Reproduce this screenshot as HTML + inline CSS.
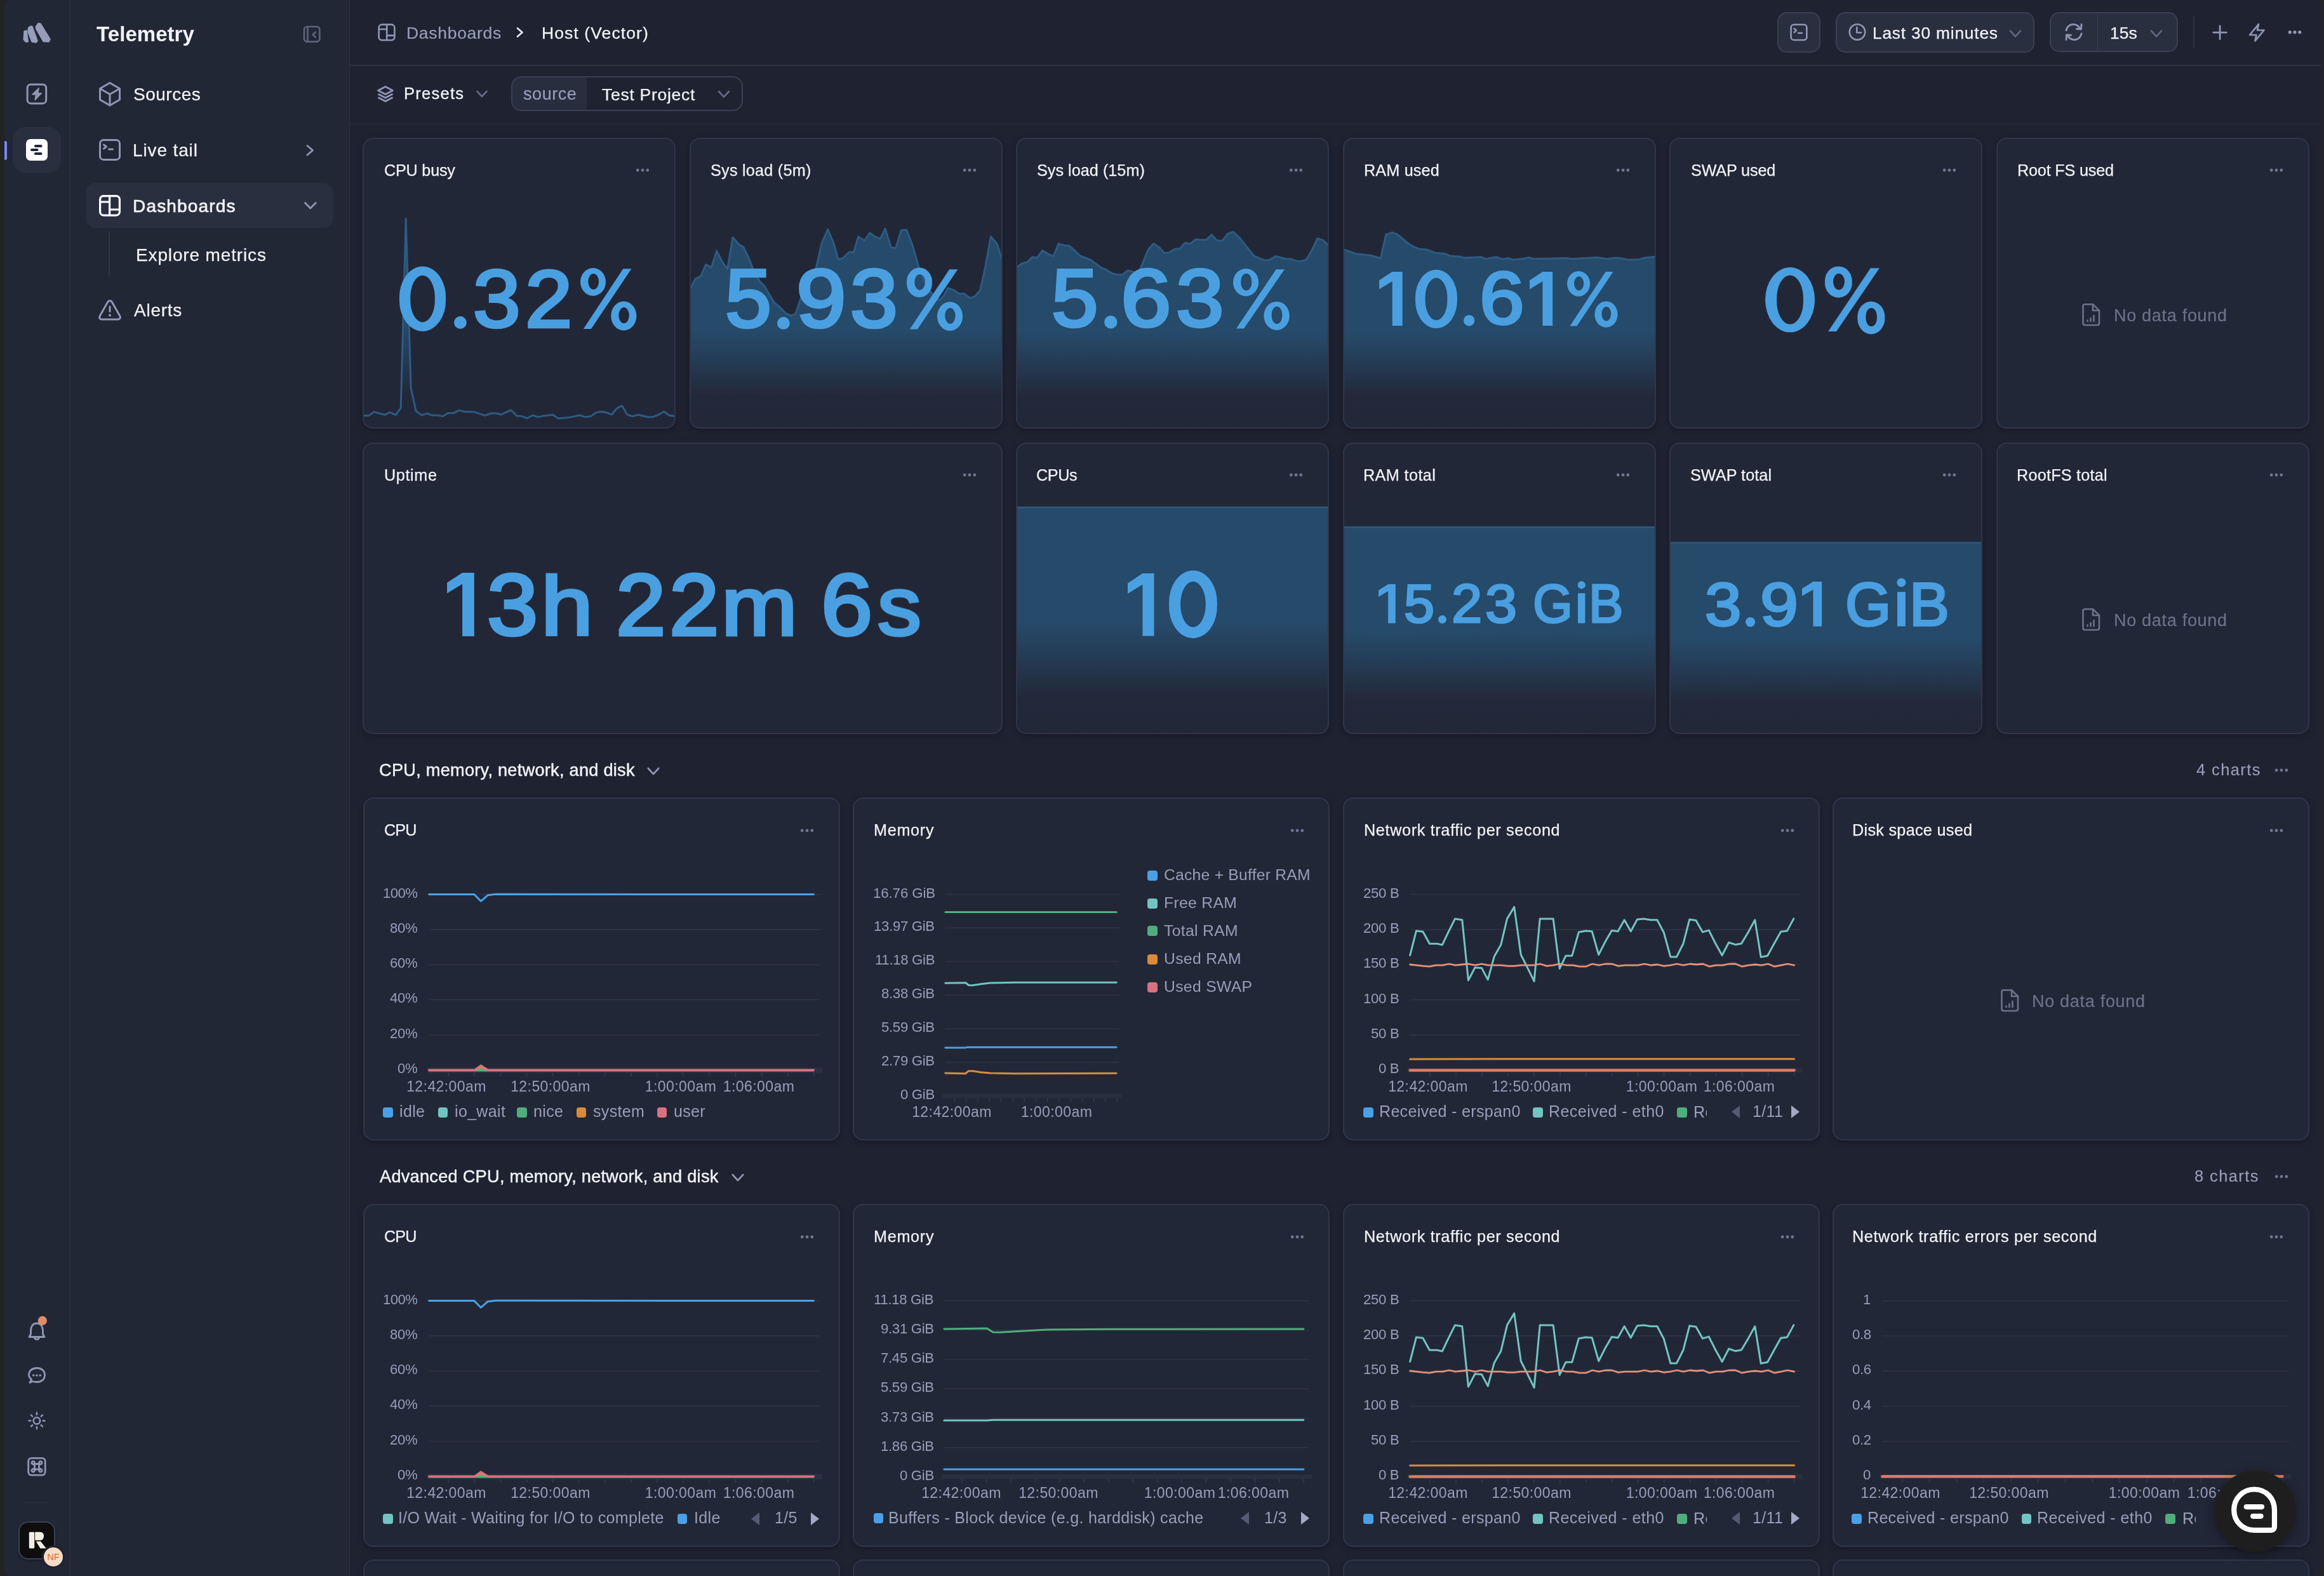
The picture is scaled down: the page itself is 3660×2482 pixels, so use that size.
<!DOCTYPE html><html><head><meta charset="utf-8"><style>html,body{margin:0;padding:0}body{width:3660px;height:2482px;overflow:hidden;position:relative;background:#222423;font-family:"Liberation Sans",sans-serif}.t{position:absolute;line-height:1;white-space:nowrap;will-change:transform}@media (max-width:2400px){html{zoom:0.5}}#app{position:absolute;left:0;top:0;width:3660px;height:2482px;overflow:hidden;background:#1f2231;clip-path:inset(0px 4px -5px 7px round 12px 12px 16px 16px)}</style></head><body><div id="app">
<div style="position:absolute;left:0.0px;top:0.0px;width:550.0px;height:2482.0px;background:#222736"></div>
<div style="position:absolute;left:109.5px;top:0.0px;width:1.5px;height:2482.0px;background:#2c3143"></div>
<div style="position:absolute;left:549.5px;top:0.0px;width:1.5px;height:2482.0px;background:#2c3143"></div>
<div style="position:absolute;left:551.0px;top:102.0px;width:3110.0px;height:1.5px;background:#2c3143"></div>
<div style="position:absolute;left:551.0px;top:194.5px;width:3110.0px;height:1.5px;background:#2c3143"></div>
<svg style="position:absolute;left:30.0px;top:30.0px;" width="56.0" height="44.0" viewBox="30.0 30.0 56.0 44.0"><g fill="#959db8" stroke="#959db8" stroke-width="2.5" stroke-linejoin="round"><polygon points="38.5,49.5 41.5,48.5 43.8,65.5 40.5,65.5 37.8,62.0"/><polygon points="45.0,44.0 48.5,41.5 50.5,42.0 58.5,64.5 56.5,66.5 50.5,65.5 44.5,50.0"/><polygon points="57.0,42.0 60.5,37.0 63.5,37.5 78.5,62.0 76.5,65.5 68.5,65.0 57.0,45.0"/></g></svg>
<svg style="position:absolute;left:38.0px;top:128.0px;" width="40.0" height="40.0" viewBox="38.0 128.0 40.0 40.0"><rect x="43.1" y="133" width="29.6" height="29.9" rx="5.5" fill="none" stroke="#8f97b3" stroke-width="3"/><polygon points="61.2,138.8 50.8,148.8 56.5,148.8 55.2,157.6 65.4,146.8 59.6,146.8" fill="#8f97b3" stroke="#8f97b3" stroke-width="1.5" stroke-linejoin="round"/></svg>
<div style="position:absolute;left:20.0px;top:200.0px;width:76.0px;height:72.0px;background:#2a2f40;border-radius:20px"></div>
<div style="position:absolute;left:41.2px;top:219.2px;width:33.6px;height:33.7px;background:#ffffff;border-radius:7px"></div>
<svg style="position:absolute;left:41.0px;top:219.0px;" width="34.0" height="34.0" viewBox="41.0 219.0 34.0 34.0"><g stroke="#222736" stroke-width="4.2" stroke-linecap="round"><line x1="56" y1="230" x2="64.5" y2="230"/><line x1="50" y1="236" x2="58.5" y2="236"/><line x1="56" y1="242" x2="64.5" y2="242"/></g></svg>
<div style="position:absolute;left:7.0px;top:222.0px;width:3.5px;height:30.0px;background:#7c87f2;border-radius:0 3px 3px 0"></div>
<svg style="position:absolute;left:40.0px;top:2070.0px;" width="40.0" height="50.0" viewBox="40.0 2070.0 40.0 50.0"><g fill="none" stroke="#8f97b3" stroke-width="2.8" stroke-linejoin="round" stroke-linecap="round"><path d="M58,2084 C51,2084 48.5,2090 48.5,2096 L48.5,2101 L46,2105.5 L70,2105.5 L67.5,2101 L67.5,2096 C67.5,2090 65,2084 58,2084 Z"/><path d="M54.5,2106 C54.5,2110.5 61.5,2110.5 61.5,2106"/></g><circle cx="66.9" cy="2079.9" r="7.1" fill="#e08c68" stroke="#222736" stroke-width="0"/></svg>
<svg style="position:absolute;left:40.0px;top:2148.0px;" width="40.0" height="36.0" viewBox="40.0 2148.0 40.0 36.0"><g fill="none" stroke="#8f97b3" stroke-width="2.8" stroke-linejoin="round" stroke-linecap="round"><path d="M47,2177.5 L49.5,2172.5 C46,2169 45.5,2166 45.5,2165.5 C45.5,2158.5 51,2154.5 58,2154.5 C65,2154.5 70.5,2158.5 70.5,2165.5 C70.5,2172.5 65,2176.5 58,2176.5 C55,2176.5 52.5,2176 50.5,2175.5 Z"/></g><g fill="#8f97b3"><circle cx="52.7" cy="2166" r="1.8"/><circle cx="57.9" cy="2166" r="1.8"/><circle cx="63.2" cy="2166" r="1.8"/></g></svg>
<svg style="position:absolute;left:40.0px;top:2220.0px;" width="36.0" height="36.0" viewBox="40.0 2220.0 36.0 36.0"><g fill="none" stroke="#8f97b3" stroke-width="2.6" stroke-linecap="round"><circle cx="57.9" cy="2237.5" r="5.2"/><line x1="67.7" y1="2237.5" x2="70.5" y2="2237.5"/><line x1="64.8" y1="2244.4" x2="66.8" y2="2246.4"/><line x1="57.9" y1="2247.3" x2="57.9" y2="2250.1"/><line x1="51.0" y1="2244.4" x2="49.0" y2="2246.4"/><line x1="48.1" y1="2237.5" x2="45.3" y2="2237.5"/><line x1="51.0" y1="2230.6" x2="49.0" y2="2228.6"/><line x1="57.9" y1="2227.7" x2="57.9" y2="2224.9"/><line x1="64.8" y1="2230.6" x2="66.8" y2="2228.6"/></g></svg>
<svg style="position:absolute;left:40.0px;top:2290.0px;" width="38.0" height="40.0" viewBox="40.0 2290.0 38.0 40.0"><g fill="none" stroke="#8f97b3" stroke-width="2.8"><rect x="44.7" y="2296.4" width="26.5" height="26.7" rx="5"/><path d="M54.5,2305.5 L61.5,2305.5 L61.5,2314 L54.5,2314 Z"/><path d="M54.5,2305.5 L54.5,2303.8 A2.3,2.3 0 1 0 52.2,2306 L54.5,2306"/><path d="M61.5,2305.5 L61.5,2303.8 A2.3,2.3 0 1 1 63.8,2306 L61.5,2306"/><path d="M54.5,2314 L54.5,2315.7 A2.3,2.3 0 1 1 52.2,2313.5 L54.5,2313.5"/><path d="M61.5,2314 L61.5,2315.7 A2.3,2.3 0 1 0 63.8,2313.5 L61.5,2313.5"/></g></svg>
<div style="position:absolute;left:38.0px;top:2365.5px;width:40.0px;height:1.5px;background:#2c3143"></div>
<div style="position:absolute;left:28.5px;top:2396.0px;width:58.9px;height:59.7px;background:#0e0e0e;border:2px solid #394057;border-radius:15px;box-sizing:border-box;box-shadow:0 2px 4px rgba(0,0,0,.3)"></div>
<svg style="position:absolute;left:40.0px;top:2408.0px;" width="36.0" height="36.0" viewBox="40.0 2408.0 36.0 36.0"><g fill="#f4efe5"><rect x="45.8" y="2412.8" width="8.4" height="25.8" rx="1.5"/><path d="M55.2,2412.8 L63,2412.8 C67.5,2412.8 69,2416 69,2419 C69,2422 67.5,2425.8 63,2425.8 L55.2,2425.8 Z"/><path d="M56.8,2427.5 L64,2427.5 L72.8,2438.6 L63.5,2438.6 Z"/></g></svg>
<div style="position:absolute;left:66.0px;top:2433.8px;width:36.0px;height:36.0px;background:#1e2232;border-radius:50%"></div>
<div style="position:absolute;left:68.8px;top:2436.6px;width:30.4px;height:30.4px;background:#f9dcc5;border-radius:50%"></div>
<div class="t" id="tx0" style="left:-916.0px;width:2000px;text-align:center;top:2444.5px;font-size:14.5px;color:#d8692a;font-weight:400;letter-spacing:0.000px;"><span>NF</span></div>
<div class="t" id="tx1" style="left:152.2px;top:37.3px;font-size:33px;color:#f2f3f7;font-weight:700;letter-spacing:0.050px;"><span>Telemetry</span></div>
<svg style="position:absolute;left:472.0px;top:36.0px;" width="38.0" height="36.0" viewBox="472.0 36.0 38.0 36.0"><g fill="none" stroke="#5d6479" stroke-width="2.6" stroke-linecap="round" stroke-linejoin="round"><rect x="479" y="42" width="24.4" height="23.6" rx="4.5"/><line x1="484.5" y1="42.5" x2="484.5" y2="65"/><polyline points="497,50.5 492.5,54.5 497,58.5"/></g></svg>
<svg style="position:absolute;left:150.0px;top:124.0px;" width="46.0" height="48.0" viewBox="150.0 124.0 46.0 48.0"><g fill="none" stroke="#8f97b3" stroke-width="3" stroke-linejoin="round"><path d="M173,130.5 L188.5,139.5 L188.5,157 L173,166 L157.5,157 L157.5,139.5 Z"/><path d="M157.5,139.5 L173,148.5 L188.5,139.5 M173,148.5 L173,166"/></g></svg>
<div class="t" id="tx2" style="left:209.5px;top:135.3px;font-size:28px;color:#f2f3f7;font-weight:400;letter-spacing:0.500px;-webkit-text-stroke:0.25px #f2f3f7;"><span>Sources</span></div>
<svg style="position:absolute;left:150.0px;top:212.0px;" width="46.0" height="46.0" viewBox="150.0 212.0 46.0 46.0"><g fill="none" stroke="#8f97b3" stroke-width="3" stroke-linejoin="round" stroke-linecap="round"><rect x="157.5" y="220.4" width="31" height="31" rx="5.5"/><polyline points="163.5,228 167.5,231 163.5,234"/><line x1="171.5" y1="235" x2="177.5" y2="235"/></g></svg>
<div class="t" id="tx3" style="left:208.6px;top:223.4px;font-size:28px;color:#f2f3f7;font-weight:400;letter-spacing:0.875px;-webkit-text-stroke:0.25px #f2f3f7;"><span>Live tail</span></div>
<svg style="position:absolute;left:476.0px;top:222.0px;" width="26.0" height="30.0" viewBox="476.0 222.0 26.0 30.0"><polyline points="484,229.5 492.5,236.7 484,244" fill="none" stroke="#8f97b3" stroke-width="2.8" stroke-linecap="round" stroke-linejoin="round"/></svg>
<div style="position:absolute;left:135.0px;top:288.3px;width:390.0px;height:71.1px;background:#2a2f40;border-radius:16px"></div>
<svg style="position:absolute;left:150.0px;top:300.0px;" width="46.0" height="46.0" viewBox="150.0 300.0 46.0 46.0"><g fill="none" stroke="#ffffff" stroke-width="3.2" stroke-linejoin="round"><rect x="157.6" y="308.6" width="30.8" height="30.5" rx="5.5"/><path d="M172.6,308.6 L172.6,339.1 M157.6,318 L172.6,318 M172.6,330 L188.4,330"/></g></svg>
<div class="t" id="tx4" style="left:208.6px;top:311.3px;font-size:28px;color:#f2f3f7;font-weight:400;letter-spacing:1.167px;-webkit-text-stroke:0.7px #f2f3f7;"><span>Dashboards</span></div>
<svg style="position:absolute;left:474.0px;top:314.0px;" width="30.0" height="20.0" viewBox="474.0 314.0 30.0 20.0"><polyline points="480.5,319.5 488.8,328 497.2,319.5" fill="none" stroke="#8f97b3" stroke-width="2.8" stroke-linecap="round" stroke-linejoin="round"/></svg>
<div style="position:absolute;left:171.3px;top:364.0px;width:1.5px;height:71.5px;background:#30364a"></div>
<div class="t" id="tx5" style="left:213.9px;top:387.5px;font-size:28px;color:#f2f3f7;font-weight:400;letter-spacing:0.857px;-webkit-text-stroke:0.25px #f2f3f7;"><span>Explore metrics</span></div>
<svg style="position:absolute;left:150.0px;top:466.0px;" width="46.0" height="44.0" viewBox="150.0 466.0 46.0 44.0"><g fill="none" stroke="#8f97b3" stroke-width="3" stroke-linejoin="round" stroke-linecap="round"><path d="M173,473.5 C171.5,473.5 170.5,474.3 169.8,475.5 L157,498 C156,500 157.2,503 160,503 L186,503 C188.8,503 190,500 189,498 L176.2,475.5 C175.5,474.3 174.5,473.5 173,473.5 Z"/><line x1="173" y1="483" x2="173" y2="490.5"/></g><circle cx="173" cy="496.5" r="2" fill="#8f97b3"/></svg>
<div class="t" id="tx6" style="left:210.6px;top:475.3px;font-size:28px;color:#f2f3f7;font-weight:400;letter-spacing:0.740px;-webkit-text-stroke:0.25px #f2f3f7;"><span>Alerts</span></div>
<svg style="position:absolute;left:590.0px;top:32.0px;" width="40.0" height="38.0" viewBox="590.0 32.0 40.0 38.0"><g fill="none" stroke="#8f97b3" stroke-width="2.6" stroke-linejoin="round"><rect x="596.6" y="38.6" width="24.8" height="24.7" rx="5"/><path d="M609.2,38.6 L609.2,63.3 M596.6,46.0 L609.2,46.0 M609.2,55.9 L621.4,55.9"/></g></svg>
<div class="t" id="tx7" style="left:640.2px;top:38.8px;font-size:26.5px;color:#979eb9;font-weight:400;letter-spacing:0.711px;-webkit-text-stroke:0.2px #979eb9;"><span>Dashboards</span></div>
<svg style="position:absolute;left:808.0px;top:40.0px;" width="22.0" height="22.0" viewBox="808.0 40.0 22.0 22.0"><polyline points="815,44.5 822.5,51 815,57.5" fill="none" stroke="#e6e8ef" stroke-width="2.8" stroke-linecap="round" stroke-linejoin="round"/></svg>
<div class="t" id="tx8" style="left:853.3px;top:38.8px;font-size:26.5px;color:#f2f3f7;font-weight:400;letter-spacing:1.100px;-webkit-text-stroke:0.25px #f2f3f7;"><span>Host (Vector)</span></div>
<svg style="position:absolute;left:588.0px;top:130.0px;" width="38.0" height="36.0" viewBox="588.0 130.0 38.0 36.0"><g fill="none" stroke="#8f97b3" stroke-width="2.8" stroke-linejoin="round"><path d="M607,136.5 L618.5,142.5 L607,148.5 L595.5,142.5 Z"/><path d="M595.5,148 L607,154 L618.5,148"/><path d="M595.5,153.5 L607,159.5 L618.5,153.5"/></g></svg>
<div class="t" id="tx9" style="left:636.0px;top:135.2px;font-size:25.5px;color:#f2f3f7;font-weight:400;letter-spacing:1.268px;-webkit-text-stroke:0.3px #f2f3f7;"><span>Presets</span></div>
<svg style="position:absolute;left:745.0px;top:138.0px;" width="28.0" height="20.0" viewBox="745.0 138.0 28.0 20.0"><polyline points="751.5,143.8 759.0,152 766.5,143.8" fill="none" stroke="#656c84" stroke-width="2.6" stroke-linecap="round" stroke-linejoin="round"/></svg>
<div style="position:absolute;left:805.2px;top:120.2px;width:364.6px;height:55.3px;border:2px solid #3a4053;border-radius:16px;box-sizing:border-box;overflow:hidden;background:#1f2231"></div>
<div style="position:absolute;left:807.2px;top:122.2px;width:116.6px;height:51.3px;background:#292e3f;border-radius:14px 0 0 14px"></div>
<div class="t" id="tx10" style="left:823.6px;top:135.4px;font-size:27px;color:#979eb9;font-weight:400;letter-spacing:0.560px;-webkit-text-stroke:0.2px #979eb9;"><span>source</span></div>
<div class="t" id="tx11" style="left:948.0px;top:135.9px;font-size:26.5px;color:#f2f3f7;font-weight:400;letter-spacing:0.726px;-webkit-text-stroke:0.25px #f2f3f7;"><span>Test Project</span></div>
<svg style="position:absolute;left:1126.0px;top:138.0px;" width="28.0" height="20.0" viewBox="1126.0 138.0 28.0 20.0"><polyline points="1132,144 1140.0,152.6 1148,144" fill="none" stroke="#656c84" stroke-width="2.6" stroke-linecap="round" stroke-linejoin="round"/></svg>
<div style="position:absolute;left:2799.0px;top:19.0px;width:67.8px;height:63.7px;background:#2a2f40;border:2px solid #3a4053;border-radius:15px;box-sizing:border-box"></div>
<svg style="position:absolute;left:2814.0px;top:32.0px;" width="38.0" height="38.0" viewBox="2814.0 32.0 38.0 38.0"><g fill="none" stroke="#8f97b3" stroke-width="2.6" stroke-linejoin="round" stroke-linecap="round"><rect x="2820.6" y="38.8" width="24.8" height="24.2" rx="4.5"/><polyline points="2825.5,45 2829,48 2825.5,51"/><line x1="2832" y1="52" x2="2838" y2="52"/></g></svg>
<div style="position:absolute;left:2891.2px;top:19.0px;width:312.7px;height:63.7px;background:#2a2f40;border:2px solid #3a4053;border-radius:15px;box-sizing:border-box"></div>
<svg style="position:absolute;left:2906.0px;top:34.0px;" width="38.0" height="34.0" viewBox="2906.0 34.0 38.0 34.0"><g fill="none" stroke="#8f97b3" stroke-width="2.6" stroke-linecap="round" stroke-linejoin="round"><circle cx="2925" cy="50.4" r="12.2"/><polyline points="2924.3,43 2924.3,51.2 2931,51.2"/></g></svg>
<div class="t" id="tx12" style="left:2948.5px;top:38.7px;font-size:26.3px;color:#f2f3f7;font-weight:400;letter-spacing:0.812px;-webkit-text-stroke:0.25px #f2f3f7;"><span>Last 30 minutes</span></div>
<svg style="position:absolute;left:3160.0px;top:42.0px;" width="28.0" height="20.0" viewBox="3160.0 42.0 28.0 20.0"><polyline points="3166,48.5 3174.0,57.5 3182,48.5" fill="none" stroke="#656c84" stroke-width="2.6" stroke-linecap="round" stroke-linejoin="round"/></svg>
<div style="position:absolute;left:3228.3px;top:19.3px;width:201.3px;height:63.0px;background:#2a2f40;border:2px solid #3a4053;border-radius:15px;box-sizing:border-box"></div>
<div style="position:absolute;left:3302.5px;top:21.0px;width:1.6px;height:60.0px;background:#3a4053"></div>
<svg style="position:absolute;left:3246.0px;top:32.0px;" width="40.0" height="38.0" viewBox="3246.0 32.0 40.0 38.0"><g fill="none" stroke="#8f97b3" stroke-width="2.8" stroke-linecap="round" stroke-linejoin="round"><path d="M3254,48 A11.5,11.5 0 0 1 3276,45.5"/><polyline points="3278,38.5 3277.5,46 3270.5,45.5"/><path d="M3278,53 A11.5,11.5 0 0 1 3256,55.5"/><polyline points="3254,62.5 3254.5,55 3261.5,55.5"/></g></svg>
<div class="t" id="tx13" style="left:3322.7px;top:38.5px;font-size:26.5px;color:#f2f3f7;font-weight:400;letter-spacing:-0.000px;-webkit-text-stroke:0.25px #f2f3f7;"><span>15s</span></div>
<svg style="position:absolute;left:3382.0px;top:42.0px;" width="28.0" height="20.0" viewBox="3382.0 42.0 28.0 20.0"><polyline points="3388,48.5 3396.0,57.5 3404,48.5" fill="none" stroke="#656c84" stroke-width="2.6" stroke-linecap="round" stroke-linejoin="round"/></svg>
<div style="position:absolute;left:3454.3px;top:25.2px;width:1.5px;height:51.0px;background:#2c3143"></div>
<svg style="position:absolute;left:3480.0px;top:35.0px;" width="32.0" height="32.0" viewBox="3480.0 35.0 32.0 32.0"><g stroke="#8f97b3" stroke-width="2.8" stroke-linecap="round"><line x1="3496.1" y1="40.8" x2="3496.1" y2="61.5"/><line x1="3485.8" y1="51.1" x2="3506.5" y2="51.1"/></g></svg>
<svg style="position:absolute;left:3536.0px;top:32.0px;" width="36.0" height="38.0" viewBox="3536.0 32.0 36.0 38.0"><polygon points="3557.0,38.0 3543.0,55.0 3553.5,55.0 3551.5,64.5 3565.5,47.5 3555.0,47.5" fill="none" stroke="#8f97b3" stroke-width="2.7" stroke-linejoin="round"/></svg>
<svg style="position:absolute;left:3598.0px;top:44.0px;" width="32.0" height="14.0" viewBox="3598.0 44.0 32.0 14.0"><g fill="#8f97b3"><circle cx="3606.3" cy="50.7" r="2.6"/><circle cx="3614" cy="50.7" r="2.6"/><circle cx="3621.8" cy="50.7" r="2.6"/></g></svg>
<div style="position:absolute;left:571.0px;top:216.5px;width:493.0px;height:458.5px;border-radius:16px;background:#222737;overflow:hidden;box-shadow:0 3px 8px rgba(10,12,20,.35)"><svg style="position:absolute;left:0;top:0" width="493.0" height="458.5" viewBox="571.0 216.5 493.0 458.5"><defs><linearGradient id="g1" x1="0" y1="0" x2="0" y2="1"><stop offset="0" stop-color="#264a6a" stop-opacity="1"/><stop offset="0.5" stop-color="#264a6a" stop-opacity="1"/><stop offset="0.66" stop-color="#264a6a" stop-opacity="0.55"/><stop offset="0.82" stop-color="#264a6a" stop-opacity="0.05"/><stop offset="1" stop-color="#264a6a" stop-opacity="0"/></linearGradient></defs><polygon points="572.0,653.9 581.0,653.9 589.0,648.2 606.1,652.8 614.1,648.9 623.2,652.8 631.2,642.1 639.2,344.0 647.2,611.2 655.2,647.1 664.4,653.5 672.4,650.5 680.3,653.5 689.5,653.5 697.5,655.1 705.5,650.1 714.6,650.1 722.6,645.9 731.7,647.8 746.6,648.2 763.7,653.9 772.9,650.5 780.9,650.5 788.8,652.3 804.8,645.5 814.0,654.6 822.0,655.1 830.0,658.1 839.1,653.5 847.1,656.2 855.1,654.6 871.1,652.8 879.1,658.5 896.2,656.9 913.3,653.5 921.3,656.2 930.5,655.1 938.5,649.4 946.5,647.8 954.4,648.9 963.6,652.3 971.6,642.5 979.6,638.6 987.6,652.3 996.7,655.1 1004.7,652.8 1020.7,656.2 1028.7,656.2 1036.7,652.8 1045.8,647.8 1053.8,653.5 1063.0,655.1 1063.0,680.0 572.0,680.0" fill="url(#g1)"/><polyline points="572.0,653.9 581.0,653.9 589.0,648.2 606.1,652.8 614.1,648.9 623.2,652.8 631.2,642.1 639.2,344.0 647.2,611.2 655.2,647.1 664.4,653.5 672.4,650.5 680.3,653.5 689.5,653.5 697.5,655.1 705.5,650.1 714.6,650.1 722.6,645.9 731.7,647.8 746.6,648.2 763.7,653.9 772.9,650.5 780.9,650.5 788.8,652.3 804.8,645.5 814.0,654.6 822.0,655.1 830.0,658.1 839.1,653.5 847.1,656.2 855.1,654.6 871.1,652.8 879.1,658.5 896.2,656.9 913.3,653.5 921.3,656.2 930.5,655.1 938.5,649.4 946.5,647.8 954.4,648.9 963.6,652.3 971.6,642.5 979.6,638.6 987.6,652.3 996.7,655.1 1004.7,652.8 1020.7,656.2 1028.7,656.2 1036.7,652.8 1045.8,647.8 1053.8,653.5 1063.0,655.1" fill="none" stroke="#2d5b82" stroke-width="3" stroke-linejoin="round"/></svg></div>
<div style="position:absolute;left:571.0px;top:216.5px;width:493.0px;height:458.5px;border-radius:16px;border:2px solid #30364a;box-sizing:border-box"></div>
<div style="position:absolute;left:1085.5px;top:216.5px;width:493.0px;height:458.5px;border-radius:16px;background:#222737;overflow:hidden;box-shadow:0 3px 8px rgba(10,12,20,.35)"><svg style="position:absolute;left:0;top:0" width="493.0" height="458.5" viewBox="1085.5 216.5 493.0 458.5"><defs><linearGradient id="g2" x1="0" y1="0" x2="0" y2="1"><stop offset="0" stop-color="#264a6a" stop-opacity="1"/><stop offset="0.5" stop-color="#264a6a" stop-opacity="1"/><stop offset="0.66" stop-color="#264a6a" stop-opacity="0.55"/><stop offset="0.82" stop-color="#264a6a" stop-opacity="0.05"/><stop offset="1" stop-color="#264a6a" stop-opacity="0"/></linearGradient></defs><polygon points="1086.5,454.3 1094.5,438.7 1102.9,434.6 1111.3,416.2 1119.8,420.6 1128.2,394.8 1137.9,413.3 1145.1,423.0 1153.5,373.5 1163.2,384.4 1170.4,388.7 1178.9,406.1 1186.1,425.4 1195.7,442.3 1203.0,449.5 1218.7,476.0 1227.1,482.8 1236.7,492.9 1245.2,496.5 1252.4,494.1 1260.9,468.8 1272.9,444.7 1285.0,420.6 1293.4,383.2 1303.1,360.8 1311.5,379.6 1319.9,408.5 1327.2,406.1 1336.8,396.5 1344.0,396.5 1351.3,372.3 1360.9,378.4 1369.4,366.3 1377.8,372.3 1386.2,375.2 1393.5,359.8 1403.1,389.7 1410.4,389.7 1418.8,362.2 1427.2,361.5 1436.9,386.8 1446.5,420.6 1455.0,442.3 1463.4,457.9 1471.8,466.4 1477.9,472.4 1485.1,466.4 1492.3,453.1 1502.0,456.7 1510.4,462.0 1517.7,462.0 1527.3,468.8 1534.5,466.4 1543.0,456.7 1550.2,425.4 1559.9,372.3 1569.5,383.2 1577.5,408.5 1577.5,680.0 1086.5,680.0" fill="url(#g2)"/><polyline points="1086.5,454.3 1094.5,438.7 1102.9,434.6 1111.3,416.2 1119.8,420.6 1128.2,394.8 1137.9,413.3 1145.1,423.0 1153.5,373.5 1163.2,384.4 1170.4,388.7 1178.9,406.1 1186.1,425.4 1195.7,442.3 1203.0,449.5 1218.7,476.0 1227.1,482.8 1236.7,492.9 1245.2,496.5 1252.4,494.1 1260.9,468.8 1272.9,444.7 1285.0,420.6 1293.4,383.2 1303.1,360.8 1311.5,379.6 1319.9,408.5 1327.2,406.1 1336.8,396.5 1344.0,396.5 1351.3,372.3 1360.9,378.4 1369.4,366.3 1377.8,372.3 1386.2,375.2 1393.5,359.8 1403.1,389.7 1410.4,389.7 1418.8,362.2 1427.2,361.5 1436.9,386.8 1446.5,420.6 1455.0,442.3 1463.4,457.9 1471.8,466.4 1477.9,472.4 1485.1,466.4 1492.3,453.1 1502.0,456.7 1510.4,462.0 1517.7,462.0 1527.3,468.8 1534.5,466.4 1543.0,456.7 1550.2,425.4 1559.9,372.3 1569.5,383.2 1577.5,408.5" fill="none" stroke="#2d5b82" stroke-width="3" stroke-linejoin="round"/></svg></div>
<div style="position:absolute;left:1085.5px;top:216.5px;width:493.0px;height:458.5px;border-radius:16px;border:2px solid #30364a;box-sizing:border-box"></div>
<div style="position:absolute;left:1600.1px;top:216.5px;width:493.0px;height:458.5px;border-radius:16px;background:#222737;overflow:hidden;box-shadow:0 3px 8px rgba(10,12,20,.35)"><svg style="position:absolute;left:0;top:0" width="493.0" height="458.5" viewBox="1600.1 216.5 493.0 458.5"><defs><linearGradient id="g3" x1="0" y1="0" x2="0" y2="1"><stop offset="0" stop-color="#264a6a" stop-opacity="1"/><stop offset="0.5" stop-color="#264a6a" stop-opacity="1"/><stop offset="0.66" stop-color="#264a6a" stop-opacity="0.55"/><stop offset="0.82" stop-color="#264a6a" stop-opacity="0.05"/><stop offset="1" stop-color="#264a6a" stop-opacity="0"/></linearGradient></defs><polygon points="1601.1,420.6 1609.5,414.5 1617.9,412.1 1626.3,404.2 1633.6,405.4 1642.0,394.0 1650.5,399.3 1658.9,403.0 1667.3,383.2 1677.0,386.1 1684.2,386.8 1692.7,394.0 1701.1,402.5 1709.5,405.6 1718.0,409.0 1733.7,420.6 1742.1,424.2 1751.7,430.2 1761.4,432.1 1767.4,432.6 1775.9,425.4 1785.5,427.8 1792.7,430.2 1800.0,413.3 1808.4,392.8 1816.8,383.2 1826.5,389.7 1833.7,398.1 1841.0,397.2 1850.6,391.6 1857.8,391.6 1866.3,382.0 1874.7,383.2 1883.2,376.4 1891.6,377.2 1900.0,377.2 1908.5,369.2 1916.9,378.4 1925.4,378.4 1933.8,367.5 1942.2,364.6 1951.9,373.5 1961.5,385.6 1974.8,402.5 1983.2,406.1 1992.9,409.7 2000.1,408.5 2008.6,403.0 2017.0,404.9 2025.4,407.3 2032.7,407.3 2041.1,410.2 2049.5,410.9 2058.0,407.8 2066.4,392.8 2074.9,374.8 2083.3,377.6 2092.1,385.6 2092.1,680.0 1601.1,680.0" fill="url(#g3)"/><polyline points="1601.1,420.6 1609.5,414.5 1617.9,412.1 1626.3,404.2 1633.6,405.4 1642.0,394.0 1650.5,399.3 1658.9,403.0 1667.3,383.2 1677.0,386.1 1684.2,386.8 1692.7,394.0 1701.1,402.5 1709.5,405.6 1718.0,409.0 1733.7,420.6 1742.1,424.2 1751.7,430.2 1761.4,432.1 1767.4,432.6 1775.9,425.4 1785.5,427.8 1792.7,430.2 1800.0,413.3 1808.4,392.8 1816.8,383.2 1826.5,389.7 1833.7,398.1 1841.0,397.2 1850.6,391.6 1857.8,391.6 1866.3,382.0 1874.7,383.2 1883.2,376.4 1891.6,377.2 1900.0,377.2 1908.5,369.2 1916.9,378.4 1925.4,378.4 1933.8,367.5 1942.2,364.6 1951.9,373.5 1961.5,385.6 1974.8,402.5 1983.2,406.1 1992.9,409.7 2000.1,408.5 2008.6,403.0 2017.0,404.9 2025.4,407.3 2032.7,407.3 2041.1,410.2 2049.5,410.9 2058.0,407.8 2066.4,392.8 2074.9,374.8 2083.3,377.6 2092.1,385.6" fill="none" stroke="#2d5b82" stroke-width="3" stroke-linejoin="round"/></svg></div>
<div style="position:absolute;left:1600.1px;top:216.5px;width:493.0px;height:458.5px;border-radius:16px;border:2px solid #30364a;box-sizing:border-box"></div>
<div style="position:absolute;left:2114.6px;top:216.5px;width:493.0px;height:458.5px;border-radius:16px;background:#222737;overflow:hidden;box-shadow:0 3px 8px rgba(10,12,20,.35)"><svg style="position:absolute;left:0;top:0" width="493.0" height="458.5" viewBox="2114.6 216.5 493.0 458.5"><defs><linearGradient id="g4" x1="0" y1="0" x2="0" y2="1"><stop offset="0" stop-color="#264a6a" stop-opacity="1"/><stop offset="0.5" stop-color="#264a6a" stop-opacity="1"/><stop offset="0.66" stop-color="#264a6a" stop-opacity="0.55"/><stop offset="0.82" stop-color="#264a6a" stop-opacity="0.05"/><stop offset="1" stop-color="#264a6a" stop-opacity="0"/></linearGradient></defs><polygon points="2115.6,392.4 2134.1,398.9 2158.2,401.8 2173.9,406.1 2182.3,369.2 2192.0,365.6 2200.4,368.7 2216.1,382.0 2225.7,388.0 2234.2,391.6 2247.4,392.8 2259.5,397.7 2274.0,398.9 2283.6,402.5 2298.1,403.7 2307.7,405.4 2331.8,404.2 2340.3,407.3 2356.0,404.2 2365.6,407.8 2375.3,406.1 2382.5,408.5 2399.4,406.8 2407.8,404.9 2415.0,407.3 2435.5,406.8 2466.9,406.1 2474.1,407.3 2505.5,405.4 2515.1,404.9 2529.6,407.3 2539.2,406.1 2548.9,405.6 2563.3,408.5 2580.2,408.5 2589.9,405.4 2606.6,403.7 2606.6,680.0 2115.6,680.0" fill="url(#g4)"/><polyline points="2115.6,392.4 2134.1,398.9 2158.2,401.8 2173.9,406.1 2182.3,369.2 2192.0,365.6 2200.4,368.7 2216.1,382.0 2225.7,388.0 2234.2,391.6 2247.4,392.8 2259.5,397.7 2274.0,398.9 2283.6,402.5 2298.1,403.7 2307.7,405.4 2331.8,404.2 2340.3,407.3 2356.0,404.2 2365.6,407.8 2375.3,406.1 2382.5,408.5 2399.4,406.8 2407.8,404.9 2415.0,407.3 2435.5,406.8 2466.9,406.1 2474.1,407.3 2505.5,405.4 2515.1,404.9 2529.6,407.3 2539.2,406.1 2548.9,405.6 2563.3,408.5 2580.2,408.5 2589.9,405.4 2606.6,403.7" fill="none" stroke="#2d5b82" stroke-width="3" stroke-linejoin="round"/></svg></div>
<div style="position:absolute;left:2114.6px;top:216.5px;width:493.0px;height:458.5px;border-radius:16px;border:2px solid #30364a;box-sizing:border-box"></div>
<div style="position:absolute;left:2629.2px;top:216.5px;width:493.0px;height:458.5px;border-radius:16px;background:#222737;overflow:hidden;box-shadow:0 3px 8px rgba(10,12,20,.35)"></div>
<div style="position:absolute;left:2629.2px;top:216.5px;width:493.0px;height:458.5px;border-radius:16px;border:2px solid #30364a;box-sizing:border-box"></div>
<div style="position:absolute;left:3143.7px;top:216.5px;width:493.0px;height:458.5px;border-radius:16px;background:#222737;overflow:hidden;box-shadow:0 3px 8px rgba(10,12,20,.35)"></div>
<div style="position:absolute;left:3143.7px;top:216.5px;width:493.0px;height:458.5px;border-radius:16px;border:2px solid #30364a;box-sizing:border-box"></div>
<div style="position:absolute;left:571.0px;top:696.6px;width:1007.5px;height:459.2px;border-radius:16px;background:#222737;overflow:hidden;box-shadow:0 3px 8px rgba(10,12,20,.35)"></div>
<div style="position:absolute;left:571.0px;top:696.6px;width:1007.5px;height:459.2px;border-radius:16px;border:2px solid #30364a;box-sizing:border-box"></div>
<div style="position:absolute;left:1600.1px;top:696.6px;width:493.0px;height:459.2px;border-radius:16px;background:#222737;overflow:hidden;box-shadow:0 3px 8px rgba(10,12,20,.35)"><svg style="position:absolute;left:0;top:0" width="493.0" height="459.2" viewBox="1600.1 696.6 493.0 459.2"><defs><linearGradient id="g5" x1="0" y1="0" x2="0" y2="1"><stop offset="0" stop-color="#264a6a" stop-opacity="1"/><stop offset="0.5" stop-color="#264a6a" stop-opacity="1"/><stop offset="0.66" stop-color="#264a6a" stop-opacity="0.55"/><stop offset="0.82" stop-color="#264a6a" stop-opacity="0.05"/><stop offset="1" stop-color="#264a6a" stop-opacity="0"/></linearGradient></defs><polygon points="1600.1,798.5 2093.1,798.5 2093.1,1160.8 1600.1,1160.8" fill="url(#g5)"/><polyline points="1600.1,798.5 2093.1,798.5" fill="none" stroke="#2d5b82" stroke-width="2.4" stroke-linejoin="round"/></svg></div>
<div style="position:absolute;left:1600.1px;top:696.6px;width:493.0px;height:459.2px;border-radius:16px;border:2px solid #30364a;box-sizing:border-box"></div>
<div style="position:absolute;left:2114.6px;top:696.6px;width:493.0px;height:459.2px;border-radius:16px;background:#222737;overflow:hidden;box-shadow:0 3px 8px rgba(10,12,20,.35)"><svg style="position:absolute;left:0;top:0" width="493.0" height="459.2" viewBox="2114.6 696.6 493.0 459.2"><defs><linearGradient id="g6" x1="0" y1="0" x2="0" y2="1"><stop offset="0" stop-color="#264a6a" stop-opacity="1"/><stop offset="0.5" stop-color="#264a6a" stop-opacity="1"/><stop offset="0.66" stop-color="#264a6a" stop-opacity="0.55"/><stop offset="0.82" stop-color="#264a6a" stop-opacity="0.05"/><stop offset="1" stop-color="#264a6a" stop-opacity="0"/></linearGradient></defs><polygon points="2114.6,829.8 2607.6,829.8 2607.6,1160.8 2114.6,1160.8" fill="url(#g6)"/><polyline points="2114.6,829.8 2607.6,829.8" fill="none" stroke="#2d5b82" stroke-width="2.4" stroke-linejoin="round"/></svg></div>
<div style="position:absolute;left:2114.6px;top:696.6px;width:493.0px;height:459.2px;border-radius:16px;border:2px solid #30364a;box-sizing:border-box"></div>
<div style="position:absolute;left:2629.2px;top:696.6px;width:493.0px;height:459.2px;border-radius:16px;background:#222737;overflow:hidden;box-shadow:0 3px 8px rgba(10,12,20,.35)"><svg style="position:absolute;left:0;top:0" width="493.0" height="459.2" viewBox="2629.2 696.6 493.0 459.2"><defs><linearGradient id="g7" x1="0" y1="0" x2="0" y2="1"><stop offset="0" stop-color="#264a6a" stop-opacity="1"/><stop offset="0.5" stop-color="#264a6a" stop-opacity="1"/><stop offset="0.66" stop-color="#264a6a" stop-opacity="0.55"/><stop offset="0.82" stop-color="#264a6a" stop-opacity="0.05"/><stop offset="1" stop-color="#264a6a" stop-opacity="0"/></linearGradient></defs><polygon points="2629.2,854.2 3122.2,854.2 3122.2,1160.8 2629.2,1160.8" fill="url(#g7)"/><polyline points="2629.2,854.2 3122.2,854.2" fill="none" stroke="#2d5b82" stroke-width="2.4" stroke-linejoin="round"/></svg></div>
<div style="position:absolute;left:2629.2px;top:696.6px;width:493.0px;height:459.2px;border-radius:16px;border:2px solid #30364a;box-sizing:border-box"></div>
<div style="position:absolute;left:3143.7px;top:696.6px;width:493.0px;height:459.2px;border-radius:16px;background:#222737;overflow:hidden;box-shadow:0 3px 8px rgba(10,12,20,.35)"></div>
<div style="position:absolute;left:3143.7px;top:696.6px;width:493.0px;height:459.2px;border-radius:16px;border:2px solid #30364a;box-sizing:border-box"></div>
<div class="t" id="tx14" style="left:605.2px;top:256.0px;font-size:25.2px;color:#f2f3f7;font-weight:400;letter-spacing:-0.211px;-webkit-text-stroke:0.25px #f2f3f7;"><span>CPU busy</span></div>
<svg style="position:absolute;left:998.0px;top:262.0px;" width="28.0" height="12.0" viewBox="998.0 262.0 28.0 12.0"><g fill="#6f7690"><circle cx="1004.2" cy="268" r="2.4"/><circle cx="1012.0" cy="268" r="2.4"/><circle cx="1019.8" cy="268" r="2.4"/></g></svg>
<div class="t" id="tx15" style="left:1118.5px;top:256.0px;font-size:25.2px;color:#f2f3f7;font-weight:400;letter-spacing:0.243px;-webkit-text-stroke:0.25px #f2f3f7;"><span>Sys load (5m)</span></div>
<svg style="position:absolute;left:1512.5px;top:262.0px;" width="28.0" height="12.0" viewBox="1512.5 262.0 28.0 12.0"><g fill="#6f7690"><circle cx="1518.7" cy="268" r="2.4"/><circle cx="1526.5" cy="268" r="2.4"/><circle cx="1534.3" cy="268" r="2.4"/></g></svg>
<div class="t" id="tx16" style="left:1632.7px;top:256.0px;font-size:25.2px;color:#f2f3f7;font-weight:400;letter-spacing:0.033px;-webkit-text-stroke:0.25px #f2f3f7;"><span>Sys load (15m)</span></div>
<svg style="position:absolute;left:2027.1px;top:262.0px;" width="28.0" height="12.0" viewBox="2027.1 262.0 28.0 12.0"><g fill="#6f7690"><circle cx="2033.3" cy="268" r="2.4"/><circle cx="2041.1" cy="268" r="2.4"/><circle cx="2048.9" cy="268" r="2.4"/></g></svg>
<div class="t" id="tx17" style="left:2147.6px;top:256.0px;font-size:25.2px;color:#f2f3f7;font-weight:400;letter-spacing:0.168px;-webkit-text-stroke:0.25px #f2f3f7;"><span>RAM used</span></div>
<svg style="position:absolute;left:2541.6px;top:262.0px;" width="28.0" height="12.0" viewBox="2541.6 262.0 28.0 12.0"><g fill="#6f7690"><circle cx="2547.8" cy="268" r="2.4"/><circle cx="2555.6" cy="268" r="2.4"/><circle cx="2563.4" cy="268" r="2.4"/></g></svg>
<div class="t" id="tx18" style="left:2662.8px;top:256.0px;font-size:25.2px;color:#f2f3f7;font-weight:400;letter-spacing:-0.139px;-webkit-text-stroke:0.25px #f2f3f7;"><span>SWAP used</span></div>
<svg style="position:absolute;left:3056.2px;top:262.0px;" width="28.0" height="12.0" viewBox="3056.2 262.0 28.0 12.0"><g fill="#6f7690"><circle cx="3062.4" cy="268" r="2.4"/><circle cx="3070.2" cy="268" r="2.4"/><circle cx="3078.0" cy="268" r="2.4"/></g></svg>
<div class="t" id="tx19" style="left:3176.7px;top:256.0px;font-size:25.2px;color:#f2f3f7;font-weight:400;letter-spacing:-0.181px;-webkit-text-stroke:0.25px #f2f3f7;"><span>Root FS used</span></div>
<svg style="position:absolute;left:3570.7px;top:262.0px;" width="28.0" height="12.0" viewBox="3570.7 262.0 28.0 12.0"><g fill="#6f7690"><circle cx="3576.9" cy="268" r="2.4"/><circle cx="3584.7" cy="268" r="2.4"/><circle cx="3592.5" cy="268" r="2.4"/></g></svg>
<div class="t" id="tx20" style="left:605.0px;top:736.0px;font-size:25.2px;color:#f2f3f7;font-weight:400;letter-spacing:0.631px;-webkit-text-stroke:0.25px #f2f3f7;"><span>Uptime</span></div>
<svg style="position:absolute;left:1512.5px;top:742.0px;" width="28.0" height="12.0" viewBox="1512.5 742.0 28.0 12.0"><g fill="#6f7690"><circle cx="1518.7" cy="748" r="2.4"/><circle cx="1526.5" cy="748" r="2.4"/><circle cx="1534.3" cy="748" r="2.4"/></g></svg>
<div class="t" id="tx21" style="left:1632.3px;top:736.0px;font-size:25.2px;color:#f2f3f7;font-weight:400;letter-spacing:-0.421px;-webkit-text-stroke:0.25px #f2f3f7;"><span>CPUs</span></div>
<svg style="position:absolute;left:2027.1px;top:742.0px;" width="28.0" height="12.0" viewBox="2027.1 742.0 28.0 12.0"><g fill="#6f7690"><circle cx="2033.3" cy="748" r="2.4"/><circle cx="2041.1" cy="748" r="2.4"/><circle cx="2048.9" cy="748" r="2.4"/></g></svg>
<div class="t" id="tx22" style="left:2147.2px;top:736.0px;font-size:25.2px;color:#f2f3f7;font-weight:400;letter-spacing:0.411px;-webkit-text-stroke:0.25px #f2f3f7;"><span>RAM total</span></div>
<svg style="position:absolute;left:2541.6px;top:742.0px;" width="28.0" height="12.0" viewBox="2541.6 742.0 28.0 12.0"><g fill="#6f7690"><circle cx="2547.8" cy="748" r="2.4"/><circle cx="2555.6" cy="748" r="2.4"/><circle cx="2563.4" cy="748" r="2.4"/></g></svg>
<div class="t" id="tx23" style="left:2662.4px;top:736.0px;font-size:25.2px;color:#f2f3f7;font-weight:400;letter-spacing:0.066px;-webkit-text-stroke:0.25px #f2f3f7;"><span>SWAP total</span></div>
<svg style="position:absolute;left:3056.2px;top:742.0px;" width="28.0" height="12.0" viewBox="3056.2 742.0 28.0 12.0"><g fill="#6f7690"><circle cx="3062.4" cy="748" r="2.4"/><circle cx="3070.2" cy="748" r="2.4"/><circle cx="3078.0" cy="748" r="2.4"/></g></svg>
<div class="t" id="tx24" style="left:3175.5px;top:736.0px;font-size:25.2px;color:#f2f3f7;font-weight:400;letter-spacing:0.236px;-webkit-text-stroke:0.25px #f2f3f7;"><span>RootFS total</span></div>
<svg style="position:absolute;left:3570.7px;top:742.0px;" width="28.0" height="12.0" viewBox="3570.7 742.0 28.0 12.0"><g fill="#6f7690"><circle cx="3576.9" cy="748" r="2.4"/><circle cx="3584.7" cy="748" r="2.4"/><circle cx="3592.5" cy="748" r="2.4"/></g></svg>
<svg style="position:absolute;left:625.0px;top:417.8px;" width="81.1" height="105.2" viewBox="625.0 417.8 81.1 105.2"><path fill-rule="evenodd" fill="#4a9fe0" d="M629.0,470.4 A36.6,48.6 0 1 0 702.1,470.4 A36.6,48.6 0 1 0 629.0,470.4 Z M646.3,470.4 A19.3,34.4 0 1 0 684.8,470.4 A19.3,34.4 0 1 0 646.3,470.4 Z"/></svg>
<svg style="position:absolute;left:710.6px;top:493.7px;" width="27.9" height="27.9" viewBox="710.6 493.7 27.9 27.9"><circle cx="724.5" cy="507.7" r="9.9" fill="#4a9fe0"/></svg>
<div class="t" style="left:745.1px;top:406.5px;font-size:128.5px;color:#4a9fe0;font-weight:400;-webkit-text-stroke:4.59px #4a9fe0;transform:scale(1.0454,1.0000);transform-origin:0 108.8px">3</div>
<div class="t" style="left:826.8px;top:406.5px;font-size:128.5px;color:#4a9fe0;font-weight:400;-webkit-text-stroke:4.59px #4a9fe0;transform:scale(1.0404,1.0000);transform-origin:0 108.8px">2</div>
<svg style="position:absolute;left:910.0px;top:417.9px;" width="96.4" height="106.4" viewBox="910.0 417.9 96.4 106.4"><path fill-rule="evenodd" fill="#4a9fe0" d="M914.0,443.9 A20.0,22.0 0 1 0 954.0,443.9 A20.0,22.0 0 1 0 914.0,443.9 Z M926.2,443.3 A8.4,12.3 0 1 0 943.1,443.3 A8.4,12.3 0 1 0 926.2,443.3 Z M962.2,497.4 A20.1,22.9 0 1 0 1002.4,497.4 A20.1,22.9 0 1 0 962.2,497.4 Z M974.4,496.5 A8.2,12.5 0 1 0 990.8,496.5 A8.2,12.5 0 1 0 974.4,496.5 Z "/><polygon points="918.9,517.8 931.0,517.8 994.5,423.1 981.4,423.1" fill="#4a9fe0"/></svg>
<div class="t" style="left:1142.2px;top:406.1px;font-size:129.8px;color:#4a9fe0;font-weight:400;-webkit-text-stroke:4.64px #4a9fe0;transform:scale(1.0103,1.0000);transform-origin:0 109.9px">5</div>
<svg style="position:absolute;left:1220.2px;top:494.5px;" width="27.8" height="27.8" viewBox="1220.2 494.5 27.8 27.8"><circle cx="1234.1" cy="508.4" r="9.9" fill="#4a9fe0"/></svg>
<div class="t" style="left:1253.8px;top:406.1px;font-size:129.8px;color:#4a9fe0;font-weight:400;-webkit-text-stroke:4.64px #4a9fe0;transform:scale(1.0882,1.0000);transform-origin:0 109.9px">9</div>
<div class="t" style="left:1339.0px;top:406.1px;font-size:129.8px;color:#4a9fe0;font-weight:400;-webkit-text-stroke:4.64px #4a9fe0;transform:scale(1.0375,1.0000);transform-origin:0 109.9px">3</div>
<svg style="position:absolute;left:1424.4px;top:418.9px;" width="96.1" height="106.1" viewBox="1424.4 418.9 96.1 106.1"><path fill-rule="evenodd" fill="#4a9fe0" d="M1428.4,444.8 A20.0,21.9 0 1 0 1468.3,444.8 A20.0,21.9 0 1 0 1428.4,444.8 Z M1440.6,444.3 A8.4,12.3 0 1 0 1457.4,444.3 A8.4,12.3 0 1 0 1440.6,444.3 Z M1476.4,498.1 A20.0,22.8 0 1 0 1516.5,498.1 A20.0,22.8 0 1 0 1476.4,498.1 Z M1488.6,497.3 A8.2,12.5 0 1 0 1505.0,497.3 A8.2,12.5 0 1 0 1488.6,497.3 Z "/><polygon points="1433.2,518.5 1445.3,518.5 1508.7,424.1 1495.5,424.1" fill="#4a9fe0"/></svg>
<div class="t" style="left:1656.0px;top:406.3px;font-size:128.3px;color:#4a9fe0;font-weight:400;-webkit-text-stroke:4.59px #4a9fe0;transform:scale(1.0299,1.0000);transform-origin:0 108.6px">5</div>
<svg style="position:absolute;left:1734.5px;top:492.7px;" width="28.5" height="28.5" viewBox="1734.5 492.7 28.5 28.5"><circle cx="1748.8" cy="507.0" r="10.2" fill="#4a9fe0"/></svg>
<div class="t" style="left:1765.2px;top:406.3px;font-size:128.3px;color:#4a9fe0;font-weight:400;-webkit-text-stroke:4.59px #4a9fe0;transform:scale(1.1136,1.0000);transform-origin:0 108.6px">6</div>
<div class="t" style="left:1852.3px;top:406.3px;font-size:128.3px;color:#4a9fe0;font-weight:400;-webkit-text-stroke:4.59px #4a9fe0;transform:scale(1.0558,1.0000);transform-origin:0 108.6px">3</div>
<svg style="position:absolute;left:1938.2px;top:418.9px;" width="96.8" height="104.9" viewBox="1938.2 418.9 96.8 104.9"><path fill-rule="evenodd" fill="#4a9fe0" d="M1942.2,444.6 A20.1,21.7 0 1 0 1982.4,444.6 A20.1,21.7 0 1 0 1942.2,444.6 Z M1954.5,444.0 A8.5,12.1 0 1 0 1971.4,444.0 A8.5,12.1 0 1 0 1954.5,444.0 Z M1990.6,497.3 A20.2,22.5 0 1 0 2031.0,497.3 A20.2,22.5 0 1 0 1990.6,497.3 Z M2002.9,496.4 A8.3,12.3 0 1 0 2019.4,496.4 A8.3,12.3 0 1 0 2002.9,496.4 Z "/><polygon points="1947.1,517.4 1959.2,517.4 2023.1,424.1 2009.9,424.1" fill="#4a9fe0"/></svg>
<svg style="position:absolute;left:2168.2px;top:423.8px;" width="44.7" height="93.1" viewBox="2168.2 423.8 44.7 93.1"><polygon points="2192.9,427.8 2172.2,441.2 2172.2,455.4 2192.9,442.9 2192.9,512.9 2208.9,512.9 2208.9,427.8" fill="#4a9fe0"/></svg>
<svg style="position:absolute;left:2224.6px;top:422.5px;" width="73.9" height="95.7" viewBox="2224.6 422.5 73.9 95.7"><path fill-rule="evenodd" fill="#4a9fe0" d="M2228.6,470.4 A33.0,43.8 0 1 0 2294.5,470.4 A33.0,43.8 0 1 0 2228.6,470.4 Z M2244.2,470.4 A17.4,31.0 0 1 0 2278.9,470.4 A17.4,31.0 0 1 0 2244.2,470.4 Z"/></svg>
<svg style="position:absolute;left:2301.3px;top:491.5px;" width="25.4" height="25.4" viewBox="2301.3 491.5 25.4 25.4"><circle cx="2314.0" cy="504.2" r="8.7" fill="#4a9fe0"/></svg>
<div class="t" style="left:2329.7px;top:411.4px;font-size:117.4px;color:#4a9fe0;font-weight:400;-webkit-text-stroke:4.20px #4a9fe0;transform:scale(1.0803,1.0000);transform-origin:0 99.4px">6</div>
<svg style="position:absolute;left:2405.0px;top:423.8px;" width="44.2" height="93.1" viewBox="2405.0 423.8 44.2 93.1"><polygon points="2429.4,427.8 2409.0,441.2 2409.0,455.4 2429.4,442.9 2429.4,512.9 2445.2,512.9 2445.2,427.8" fill="#4a9fe0"/></svg>
<svg style="position:absolute;left:2464.1px;top:422.6px;" width="87.6" height="96.7" viewBox="2464.1 422.6 87.6 96.7"><path fill-rule="evenodd" fill="#4a9fe0" d="M2468.1,446.4 A18.0,19.8 0 1 0 2504.2,446.4 A18.0,19.8 0 1 0 2468.1,446.4 Z M2479.1,445.9 A7.6,11.1 0 1 0 2494.3,445.9 A7.6,11.1 0 1 0 2479.1,445.9 Z M2511.5,494.7 A18.1,20.6 0 1 0 2547.7,494.7 A18.1,20.6 0 1 0 2511.5,494.7 Z M2522.5,493.9 A7.4,11.3 0 1 0 2537.3,493.9 A7.4,11.3 0 1 0 2522.5,493.9 Z "/><polygon points="2472.5,513.1 2483.4,513.1 2540.6,427.7 2528.8,427.7" fill="#4a9fe0"/></svg>
<svg style="position:absolute;left:2775.8px;top:416.7px;" width="86.1" height="110.3" viewBox="2775.8 416.7 86.1 110.3"><path fill-rule="evenodd" fill="#4a9fe0" d="M2779.8,471.9 A39.0,51.1 0 1 0 2857.9,471.9 A39.0,51.1 0 1 0 2779.8,471.9 Z M2798.0,471.9 A20.9,36.1 0 1 0 2839.7,471.9 A20.9,36.1 0 1 0 2798.0,471.9 Z"/></svg>
<svg style="position:absolute;left:2869.7px;top:416.8px;" width="102.3" height="111.5" viewBox="2869.7 416.8 102.3 111.5"><path fill-rule="evenodd" fill="#4a9fe0" d="M2873.7,443.9 A21.4,23.1 0 1 0 2916.4,443.9 A21.4,23.1 0 1 0 2873.7,443.9 Z M2886.7,443.4 A9.0,12.9 0 1 0 2904.7,443.4 A9.0,12.9 0 1 0 2886.7,443.4 Z M2925.1,500.2 A21.5,24.1 0 1 0 2968.0,500.2 A21.5,24.1 0 1 0 2925.1,500.2 Z M2938.1,499.3 A8.8,13.1 0 1 0 2955.6,499.3 A8.8,13.1 0 1 0 2938.1,499.3 Z "/><polygon points="2878.9,521.7 2891.8,521.7 2959.6,422.1 2945.6,422.1" fill="#4a9fe0"/></svg>
<svg style="position:absolute;left:699.9px;top:897.8px;" width="50.8" height="108.1" viewBox="699.9 897.8 50.8 108.1"><polygon points="728.0,901.8 703.9,917.6 703.9,934.2 728.0,919.5 728.0,1001.9 746.7,1001.9 746.7,901.8" fill="#4a9fe0"/></svg>
<div class="t" style="left:767.3px;top:882.5px;font-size:138.1px;color:#4a9fe0;font-weight:400;-webkit-text-stroke:4.94px #4a9fe0;transform:scale(1.0433,1.0000);transform-origin:0 116.9px">3</div>
<div class="t" style="left:851.9px;top:882.5px;font-size:138.1px;color:#4a9fe0;font-weight:400;-webkit-text-stroke:4.94px #4a9fe0;transform:scale(1.0660,0.9496);transform-origin:0 116.9px">h</div>
<div class="t" style="left:969.8px;top:882.5px;font-size:138.1px;color:#4a9fe0;font-weight:400;-webkit-text-stroke:4.94px #4a9fe0;transform:scale(1.0209,1.0000);transform-origin:0 116.9px">2</div>
<div class="t" style="left:1053.6px;top:882.5px;font-size:138.1px;color:#4a9fe0;font-weight:400;-webkit-text-stroke:4.94px #4a9fe0;transform:scale(1.0209,1.0000);transform-origin:0 116.9px">2</div>
<div class="t" style="left:1135.7px;top:882.5px;font-size:138.1px;color:#4a9fe0;font-weight:400;-webkit-text-stroke:4.94px #4a9fe0;transform:scale(1.0411,0.9492);transform-origin:0 116.9px">m</div>
<div class="t" style="left:1292.5px;top:882.5px;font-size:138.1px;color:#4a9fe0;font-weight:400;-webkit-text-stroke:4.94px #4a9fe0;transform:scale(1.0564,1.0000);transform-origin:0 116.9px">6</div>
<div class="t" style="left:1381.9px;top:882.5px;font-size:138.1px;color:#4a9fe0;font-weight:400;-webkit-text-stroke:4.94px #4a9fe0;transform:scale(0.9975,0.9492);transform-origin:0 116.9px">s</div>
<svg style="position:absolute;left:1771.5px;top:898.5px;" width="49.5" height="106.6" viewBox="1771.5 898.5 49.5 106.6"><polygon points="1798.9,902.5 1775.5,918.1 1775.5,934.4 1798.9,920.0 1798.9,1001.1 1817.0,1001.1 1817.0,902.5" fill="#4a9fe0"/></svg>
<svg style="position:absolute;left:1836.8px;top:897.0px;" width="83.9" height="109.6" viewBox="1836.8 897.0 83.9 109.6"><path fill-rule="evenodd" fill="#4a9fe0" d="M1840.8,951.8 A38.0,50.8 0 1 0 1916.7,951.8 A38.0,50.8 0 1 0 1840.8,951.8 Z M1858.8,951.8 A19.9,35.9 0 1 0 1898.7,951.8 A19.9,35.9 0 1 0 1858.8,951.8 Z"/></svg>
<svg style="position:absolute;left:2167.3px;top:916.4px;" width="34.8" height="69.4" viewBox="2167.3 916.4 34.8 69.4"><polygon points="2186.4,920.4 2171.3,930.1 2171.3,940.3 2186.4,931.3 2186.4,981.8 2198.1,981.8 2198.1,920.4" fill="#4a9fe0"/></svg>
<div class="t" style="left:2211.0px;top:908.6px;font-size:84.7px;color:#4a9fe0;font-weight:400;-webkit-text-stroke:3.03px #4a9fe0;transform:scale(1.0192,1.0000);transform-origin:0 71.7px">5</div>
<svg style="position:absolute;left:2260.7px;top:964.8px;" width="21.0" height="21.0" viewBox="2260.7 964.8 21.0 21.0"><circle cx="2271.2" cy="975.3" r="6.5" fill="#4a9fe0"/></svg>
<div class="t" style="left:2286.0px;top:908.6px;font-size:84.7px;color:#4a9fe0;font-weight:400;-webkit-text-stroke:3.03px #4a9fe0;transform:scale(1.0222,1.0000);transform-origin:0 71.7px">2</div>
<div class="t" style="left:2338.8px;top:908.6px;font-size:84.7px;color:#4a9fe0;font-weight:400;-webkit-text-stroke:3.03px #4a9fe0;transform:scale(1.0608,1.0000);transform-origin:0 71.7px">3</div>
<div class="t" style="left:2413.8px;top:908.6px;font-size:84.7px;color:#4a9fe0;font-weight:400;-webkit-text-stroke:3.03px #4a9fe0;transform:scale(0.9536,1.0000);transform-origin:0 71.7px">G</div>
<svg style="position:absolute;left:2478.6px;top:908.3px;" width="23.4" height="79.5" viewBox="2478.6 908.3 23.4 79.5"><rect x="2484.6" y="934.5" width="11.4" height="47.3" fill="#4a9fe0"/><circle cx="2490.3" cy="921.6" r="6.1" fill="#4a9fe0"/></svg>
<div class="t" style="left:2501.7px;top:908.6px;font-size:84.7px;color:#4a9fe0;font-weight:400;-webkit-text-stroke:3.03px #4a9fe0;transform:scale(0.9638,1.0000);transform-origin:0 71.7px">B</div>
<div class="t" style="left:2684.8px;top:902.7px;font-size:97.1px;color:#4a9fe0;font-weight:400;-webkit-text-stroke:3.47px #4a9fe0;transform:scale(1.0642,1.0000);transform-origin:0 82.2px">3</div>
<svg style="position:absolute;left:2744.8px;top:967.5px;" width="23.2" height="23.2" viewBox="2744.8 967.5 23.2 23.2"><circle cx="2756.4" cy="979.1" r="7.6" fill="#4a9fe0"/></svg>
<div class="t" style="left:2771.5px;top:902.7px;font-size:97.1px;color:#4a9fe0;font-weight:400;-webkit-text-stroke:3.47px #4a9fe0;transform:scale(1.1095,1.0000);transform-origin:0 82.2px">9</div>
<svg style="position:absolute;left:2833.6px;top:912.3px;" width="39.1" height="78.4" viewBox="2833.6 912.3 39.1 78.4"><polygon points="2855.1,916.3 2837.6,927.4 2837.6,939.1 2855.1,928.8 2855.1,986.7 2868.7,986.7 2868.7,916.3" fill="#4a9fe0"/></svg>
<div class="t" style="left:2905.8px;top:902.7px;font-size:97.1px;color:#4a9fe0;font-weight:400;-webkit-text-stroke:3.47px #4a9fe0;transform:scale(0.9558,1.0000);transform-origin:0 82.2px">G</div>
<svg style="position:absolute;left:2981.5px;top:903.3px;" width="24.9" height="89.4" viewBox="2981.5 903.3 24.9 89.4"><rect x="2987.5" y="932.5" width="12.9" height="54.2" fill="#4a9fe0"/><circle cx="2993.9" cy="917.7" r="7.0" fill="#4a9fe0"/></svg>
<div class="t" style="left:3007.3px;top:902.7px;font-size:97.1px;color:#4a9fe0;font-weight:400;-webkit-text-stroke:3.47px #4a9fe0;transform:scale(0.9710,1.0000);transform-origin:0 82.2px">B</div>
<svg style="position:absolute;left:3276.3px;top:475.0px;" width="36.0" height="42.0" viewBox="3276.3 475.0 36.0 42.0"><g fill="none" stroke="#6c7289" stroke-width="2.6" stroke-linejoin="round" stroke-linecap="round"><path d="M3280.8,482 C3280.8,480 3282.3,479.3 3284.3,479.3 L3296.3,479.3 L3306.3,489 L3306.3,509 C3306.3,511 3304.8,512 3302.8,512 L3284.3,512 C3282.3,512 3280.8,511 3280.8,509 Z"/><path d="M3296.3,479.3 L3296.3,489 L3306.3,489"/><line x1="3287.8" y1="506" x2="3287.8" y2="504.5"/><line x1="3292.8" y1="506" x2="3292.8" y2="501"/><line x1="3297.8" y1="506" x2="3297.8" y2="497"/></g></svg>
<div class="t" id="tx25" style="left:3328.5px;top:484.1px;font-size:27px;color:#6c7289;font-weight:400;letter-spacing:0.701px;-webkit-text-stroke:0.2px #6c7289;"><span>No data found</span></div>
<svg style="position:absolute;left:3276.3px;top:955.0px;" width="36.0" height="42.0" viewBox="3276.3 955.0 36.0 42.0"><g fill="none" stroke="#6c7289" stroke-width="2.6" stroke-linejoin="round" stroke-linecap="round"><path d="M3280.8,962 C3280.8,960 3282.3,959.3 3284.3,959.3 L3296.3,959.3 L3306.3,969 L3306.3,989 C3306.3,991 3304.8,992 3302.8,992 L3284.3,992 C3282.3,992 3280.8,991 3280.8,989 Z"/><path d="M3296.3,959.3 L3296.3,969 L3306.3,969"/><line x1="3287.8" y1="986" x2="3287.8" y2="984.5"/><line x1="3292.8" y1="986" x2="3292.8" y2="981"/><line x1="3297.8" y1="986" x2="3297.8" y2="977"/></g></svg>
<div class="t" id="tx26" style="left:3328.5px;top:964.1px;font-size:27px;color:#6c7289;font-weight:400;letter-spacing:0.701px;-webkit-text-stroke:0.2px #6c7289;"><span>No data found</span></div>
<div class="t" id="tx27" style="left:597.0px;top:1198.7px;font-size:27.2px;color:#f2f3f7;font-weight:400;letter-spacing:0.248px;-webkit-text-stroke:0.45px #f2f3f7;"><span>CPU, memory, network, and disk</span></div>
<svg style="position:absolute;left:1016.7px;top:1203.0px;" width="24.0" height="22.0" viewBox="1016.7 1203.0 24.0 22.0"><polyline points="1020.4000000000001,1210 1028.7,1219 1037.0,1210" fill="none" stroke="#8f97b3" stroke-width="2.6" stroke-linecap="round" stroke-linejoin="round"/></svg>
<div class="t" id="tx28" style="right:99.6px;top:1200.2px;font-size:25.5px;color:#979eb9;font-weight:400;letter-spacing:1.398px;-webkit-text-stroke:0.15px #979eb9;"><span>4 charts</span></div>
<svg style="position:absolute;left:3579.0px;top:1206.5px;" width="28.0" height="12.0" viewBox="3579.0 1206.5 28.0 12.0"><g fill="#6f7690"><circle cx="3585.2" cy="1212.5" r="2.4"/><circle cx="3593.0" cy="1212.5" r="2.4"/><circle cx="3600.8" cy="1212.5" r="2.4"/></g></svg>
<div style="position:absolute;left:571.6px;top:1256.3px;width:751.0px;height:539.3px;border-radius:16px;background:#222737;overflow:hidden;box-shadow:0 3px 8px rgba(10,12,20,.35)"><svg style="position:absolute;left:0;top:0" width="751.0" height="539.3" viewBox="571.6 1256.3 751.0 539.3"><line x1="675.2" y1="1408.9" x2="1290.9" y2="1408.9" stroke="#2e3345" stroke-width="1.6"/><line x1="675.2" y1="1464.2" x2="1290.9" y2="1464.2" stroke="#2e3345" stroke-width="1.6"/><line x1="675.2" y1="1519.5" x2="1290.9" y2="1519.5" stroke="#2e3345" stroke-width="1.6"/><line x1="675.2" y1="1574.7" x2="1290.9" y2="1574.7" stroke="#2e3345" stroke-width="1.6"/><line x1="675.2" y1="1630.0" x2="1290.9" y2="1630.0" stroke="#2e3345" stroke-width="1.6"/><rect x="672.3" y="1681.6" width="622.7" height="8.6" fill="#2b3042"/><g stroke="#353b4e" stroke-width="1.5"><line x1="705.8" y1="1689.5" x2="705.8" y2="1695.5"/><line x1="746.9" y1="1689.5" x2="746.9" y2="1695.5"/><line x1="788.0" y1="1689.5" x2="788.0" y2="1695.5"/><line x1="829.1" y1="1689.5" x2="829.1" y2="1695.5"/><line x1="870.2" y1="1689.5" x2="870.2" y2="1695.5"/><line x1="911.3" y1="1689.5" x2="911.3" y2="1695.5"/><line x1="952.4" y1="1689.5" x2="952.4" y2="1695.5"/><line x1="993.5" y1="1689.5" x2="993.5" y2="1695.5"/><line x1="1034.7" y1="1689.5" x2="1034.7" y2="1695.5"/><line x1="1075.8" y1="1689.5" x2="1075.8" y2="1695.5"/><line x1="1116.9" y1="1689.5" x2="1116.9" y2="1695.5"/><line x1="1158.0" y1="1689.5" x2="1158.0" y2="1695.5"/><line x1="1199.1" y1="1689.5" x2="1199.1" y2="1695.5"/><line x1="1240.2" y1="1689.5" x2="1240.2" y2="1695.5"/><line x1="1281.3" y1="1689.5" x2="1281.3" y2="1695.5"/></g><polyline points="675.2,1408.9 746.4,1408.9 757.0,1419.5 768.0,1410.0 780.0,1408.6 1281.0,1408.8" fill="none" stroke="#4aa0e6" stroke-width="3" stroke-linejoin="round" stroke-linecap="round"/><polygon points="745.0,1687.0 757.0,1679.0 770.0,1687.0" fill="#d98b3a"/><polygon points="748.0,1687.0 757.0,1682.5 767.0,1687.0" fill="#4fae7c"/><polyline points="675.2,1687.0 1281.0,1687.0" fill="none" stroke="#4fae7c" stroke-width="1.5" stroke-linejoin="round" stroke-linecap="round"/><polyline points="675.2,1685.6 747.0,1685.6 757.0,1678.5 768.0,1685.6 1281.0,1685.6" fill="none" stroke="#d9717f" stroke-width="3.4" stroke-linejoin="round" stroke-linecap="round"/></svg></div>
<div style="position:absolute;left:571.6px;top:1256.3px;width:751.0px;height:539.3px;border-radius:16px;border:2px solid #30364a;box-sizing:border-box"></div>
<div class="t" id="tx29" style="left:604.9px;top:1295.3px;font-size:25.2px;color:#f2f3f7;font-weight:400;letter-spacing:-0.889px;-webkit-text-stroke:0.25px #f2f3f7;"><span>CPU</span></div>
<svg style="position:absolute;left:1257.1px;top:1302.0px;" width="28.0" height="12.0" viewBox="1257.1 1302.0 28.0 12.0"><g fill="#6f7690"><circle cx="1263.3" cy="1308" r="2.4"/><circle cx="1271.1" cy="1308" r="2.4"/><circle cx="1278.9" cy="1308" r="2.4"/></g></svg>
<div class="t" id="tx30" style="right:3002.4px;top:1395.6px;font-size:22.2px;color:#979eb9;font-weight:400;letter-spacing:-0.565px;"><span>100%</span></div>
<div class="t" id="tx31" style="right:3002.4px;top:1450.9px;font-size:22.2px;color:#979eb9;font-weight:400;letter-spacing:-0.320px;"><span>80%</span></div>
<div class="t" id="tx32" style="right:3002.4px;top:1506.2px;font-size:22.2px;color:#979eb9;font-weight:400;letter-spacing:-0.320px;"><span>60%</span></div>
<div class="t" id="tx33" style="right:3002.4px;top:1561.4px;font-size:22.2px;color:#979eb9;font-weight:400;letter-spacing:-0.320px;"><span>40%</span></div>
<div class="t" id="tx34" style="right:3002.4px;top:1616.7px;font-size:22.2px;color:#979eb9;font-weight:400;letter-spacing:-0.320px;"><span>20%</span></div>
<div class="t" id="tx35" style="right:3002.4px;top:1672.0px;font-size:22.2px;color:#979eb9;font-weight:400;letter-spacing:-0.320px;"><span>0%</span></div>
<div class="t" id="tx36" style="left:-296.9px;width:2000px;text-align:center;top:1699.8px;font-size:23px;color:#979eb9;font-weight:400;letter-spacing:0.421px;"><span>12:42:00am</span></div>
<div class="t" id="tx37" style="left:-133.0px;width:2000px;text-align:center;top:1699.8px;font-size:23px;color:#979eb9;font-weight:400;letter-spacing:0.421px;"><span>12:50:00am</span></div>
<div class="t" id="tx38" style="left:72.0px;width:2000px;text-align:center;top:1699.8px;font-size:23px;color:#979eb9;font-weight:400;letter-spacing:0.421px;"><span>1:00:00am</span></div>
<div class="t" id="tx39" style="left:195.0px;width:2000px;text-align:center;top:1699.8px;font-size:23px;color:#979eb9;font-weight:400;letter-spacing:0.421px;"><span>1:06:00am</span></div>
<div style="position:absolute;left:603.1px;top:1744.0px;width:15.5px;height:16.0px;background:#4aa0e6;border-radius:4px"></div>
<div class="t" id="tx40" style="left:629.1px;top:1738.0px;font-size:25px;color:#979eb9;font-weight:400;letter-spacing:0.334px;"><span>idle</span></div>
<div style="position:absolute;left:689.8px;top:1744.0px;width:15.5px;height:16.0px;background:#72c4c2;border-radius:4px"></div>
<div class="t" id="tx41" style="left:715.8px;top:1738.0px;font-size:25px;color:#979eb9;font-weight:400;letter-spacing:0.334px;"><span>io_wait</span></div>
<div style="position:absolute;left:814.2px;top:1744.0px;width:15.5px;height:16.0px;background:#4fae7c;border-radius:4px"></div>
<div class="t" id="tx42" style="left:839.8px;top:1738.0px;font-size:25px;color:#979eb9;font-weight:400;letter-spacing:0.334px;"><span>nice</span></div>
<div style="position:absolute;left:907.6px;top:1744.0px;width:15.5px;height:16.0px;background:#d98b3a;border-radius:4px"></div>
<div class="t" id="tx43" style="left:933.6px;top:1738.0px;font-size:25px;color:#979eb9;font-weight:400;letter-spacing:0.334px;"><span>system</span></div>
<div style="position:absolute;left:1034.6px;top:1744.0px;width:15.5px;height:16.0px;background:#d9717f;border-radius:4px"></div>
<div class="t" id="tx44" style="left:1061.4px;top:1738.0px;font-size:25px;color:#979eb9;font-weight:400;letter-spacing:0.334px;"><span>user</span></div>
<div style="position:absolute;left:1343.2px;top:1256.3px;width:751.0px;height:539.3px;border-radius:16px;background:#222737;overflow:hidden;box-shadow:0 3px 8px rgba(10,12,20,.35)"><svg style="position:absolute;left:0;top:0" width="751.0" height="539.3" viewBox="1343.2 1256.3 751.0 539.3"><line x1="1489" y1="1408.8" x2="1762.6" y2="1408.8" stroke="#2e3345" stroke-width="1.6"/><line x1="1489" y1="1461.7" x2="1762.6" y2="1461.7" stroke="#2e3345" stroke-width="1.6"/><line x1="1489" y1="1514.6" x2="1762.6" y2="1514.6" stroke="#2e3345" stroke-width="1.6"/><line x1="1489" y1="1567.6" x2="1762.6" y2="1567.6" stroke="#2e3345" stroke-width="1.6"/><line x1="1489" y1="1620.5" x2="1762.6" y2="1620.5" stroke="#2e3345" stroke-width="1.6"/><line x1="1489" y1="1673.4" x2="1762.6" y2="1673.4" stroke="#2e3345" stroke-width="1.6"/><rect x="1484.5" y="1722.6" width="282" height="7" fill="#2a2f40"/><g stroke="#353b4e" stroke-width="1.5"><line x1="1503.5" y1="1729.6" x2="1503.5" y2="1735.6"/><line x1="1521.8" y1="1729.6" x2="1521.8" y2="1735.6"/><line x1="1540.1" y1="1729.6" x2="1540.1" y2="1735.6"/><line x1="1558.4" y1="1729.6" x2="1558.4" y2="1735.6"/><line x1="1576.7" y1="1729.6" x2="1576.7" y2="1735.6"/><line x1="1595.0" y1="1729.6" x2="1595.0" y2="1735.6"/><line x1="1613.3" y1="1729.6" x2="1613.3" y2="1735.6"/><line x1="1631.5" y1="1729.6" x2="1631.5" y2="1735.6"/><line x1="1649.8" y1="1729.6" x2="1649.8" y2="1735.6"/><line x1="1668.1" y1="1729.6" x2="1668.1" y2="1735.6"/><line x1="1686.4" y1="1729.6" x2="1686.4" y2="1735.6"/><line x1="1704.7" y1="1729.6" x2="1704.7" y2="1735.6"/><line x1="1723.0" y1="1729.6" x2="1723.0" y2="1735.6"/><line x1="1741.3" y1="1729.6" x2="1741.3" y2="1735.6"/><line x1="1759.6" y1="1729.6" x2="1759.6" y2="1735.6"/></g><polyline points="1489.0,1436.8 1758.4,1436.8" fill="none" stroke="#4fae7c" stroke-width="3" stroke-linejoin="round" stroke-linecap="round"/><polyline points="1489.0,1548.6 1521.0,1548.0 1525.5,1551.8 1532.0,1552.0 1545.0,1550.0 1560.0,1548.2 1600.0,1547.6 1758.4,1547.6" fill="none" stroke="#72c4c2" stroke-width="3" stroke-linejoin="round" stroke-linecap="round"/><polyline points="1489.0,1650.2 1521.0,1650.2 1524.0,1649.5 1758.4,1649.5" fill="none" stroke="#4aa0e6" stroke-width="3" stroke-linejoin="round" stroke-linecap="round"/><polyline points="1489.0,1690.2 1521.0,1691.0 1525.5,1687.0 1533.0,1687.0 1545.0,1689.0 1560.0,1690.2 1600.0,1691.0 1758.4,1690.6" fill="none" stroke="#d98b3a" stroke-width="3" stroke-linejoin="round" stroke-linecap="round"/></svg></div>
<div style="position:absolute;left:1343.2px;top:1256.3px;width:751.0px;height:539.3px;border-radius:16px;border:2px solid #30364a;box-sizing:border-box"></div>
<div class="t" id="tx45" style="left:1375.7px;top:1295.3px;font-size:25.2px;color:#f2f3f7;font-weight:400;letter-spacing:0.711px;-webkit-text-stroke:0.25px #f2f3f7;"><span>Memory</span></div>
<svg style="position:absolute;left:2028.7px;top:1302.0px;" width="28.0" height="12.0" viewBox="2028.7 1302.0 28.0 12.0"><g fill="#6f7690"><circle cx="2034.9" cy="1308" r="2.4"/><circle cx="2042.7" cy="1308" r="2.4"/><circle cx="2050.5" cy="1308" r="2.4"/></g></svg>
<div class="t" id="tx46" style="right:2187.2px;top:1395.5px;font-size:22.2px;color:#979eb9;font-weight:400;letter-spacing:-0.075px;"><span>16.76 GiB</span></div>
<div class="t" id="tx47" style="right:2187.8px;top:1448.4px;font-size:22.2px;color:#979eb9;font-weight:400;letter-spacing:-0.320px;"><span>13.97 GiB</span></div>
<div class="t" id="tx48" style="right:2187.8px;top:1501.3px;font-size:22.2px;color:#979eb9;font-weight:400;letter-spacing:-0.320px;"><span>11.18 GiB</span></div>
<div class="t" id="tx49" style="right:2187.8px;top:1554.3px;font-size:22.2px;color:#979eb9;font-weight:400;letter-spacing:-0.320px;"><span>8.38 GiB</span></div>
<div class="t" id="tx50" style="right:2187.8px;top:1607.2px;font-size:22.2px;color:#979eb9;font-weight:400;letter-spacing:-0.320px;"><span>5.59 GiB</span></div>
<div class="t" id="tx51" style="right:2187.8px;top:1660.1px;font-size:22.2px;color:#979eb9;font-weight:400;letter-spacing:-0.320px;"><span>2.79 GiB</span></div>
<div class="t" id="tx52" style="right:2187.8px;top:1713.0px;font-size:22.2px;color:#979eb9;font-weight:400;letter-spacing:-0.320px;"><span>0 GiB</span></div>
<div class="t" id="tx53" style="left:499.1px;width:2000px;text-align:center;top:1739.9px;font-size:23px;color:#979eb9;font-weight:400;letter-spacing:0.421px;"><span>12:42:00am</span></div>
<div class="t" id="tx54" style="left:663.8px;width:2000px;text-align:center;top:1739.9px;font-size:23px;color:#979eb9;font-weight:400;letter-spacing:0.421px;"><span>1:00:00am</span></div>
<div style="position:absolute;left:1807.0px;top:1371.0px;width:15.5px;height:16.0px;background:#4aa0e6;border-radius:4px"></div>
<div class="t" id="tx55" style="left:1833.4px;top:1366.4px;font-size:24.7px;color:#979eb9;font-weight:400;letter-spacing:0.234px;"><span>Cache + Buffer RAM</span></div>
<div style="position:absolute;left:1807.0px;top:1414.8px;width:15.5px;height:16.0px;background:#72c4c2;border-radius:4px"></div>
<div class="t" id="tx56" style="left:1833.4px;top:1410.2px;font-size:24.7px;color:#979eb9;font-weight:400;letter-spacing:0.334px;"><span>Free RAM</span></div>
<div style="position:absolute;left:1807.0px;top:1458.4px;width:15.5px;height:16.0px;background:#4fae7c;border-radius:4px"></div>
<div class="t" id="tx57" style="left:1833.4px;top:1453.8px;font-size:24.7px;color:#979eb9;font-weight:400;letter-spacing:0.334px;"><span>Total RAM</span></div>
<div style="position:absolute;left:1807.0px;top:1503.0px;width:15.5px;height:16.0px;background:#d98b3a;border-radius:4px"></div>
<div class="t" id="tx58" style="left:1833.4px;top:1498.4px;font-size:24.7px;color:#979eb9;font-weight:400;letter-spacing:0.334px;"><span>Used RAM</span></div>
<div style="position:absolute;left:1807.0px;top:1546.7px;width:15.5px;height:16.0px;background:#d9717f;border-radius:4px"></div>
<div class="t" id="tx59" style="left:1833.4px;top:1542.1px;font-size:24.7px;color:#979eb9;font-weight:400;letter-spacing:0.334px;"><span>Used SWAP</span></div>
<div style="position:absolute;left:2115.0px;top:1256.3px;width:751.0px;height:539.3px;border-radius:16px;background:#222737;overflow:hidden;box-shadow:0 3px 8px rgba(10,12,20,.35)"><svg style="position:absolute;left:0;top:0" width="751.0" height="539.3" viewBox="2115.0 1256.3 751.0 539.3"><line x1="2220.6" y1="1408.8" x2="2835" y2="1408.8" stroke="#2e3345" stroke-width="1.6"/><line x1="2220.6" y1="1464.2" x2="2835" y2="1464.2" stroke="#2e3345" stroke-width="1.6"/><line x1="2220.6" y1="1519.5" x2="2835" y2="1519.5" stroke="#2e3345" stroke-width="1.6"/><line x1="2220.6" y1="1574.9" x2="2835" y2="1574.9" stroke="#2e3345" stroke-width="1.6"/><line x1="2220.6" y1="1630.2" x2="2835" y2="1630.2" stroke="#2e3345" stroke-width="1.6"/><rect x="2216.5" y="1682.6" width="622" height="7" fill="#2a2f40"/><g stroke="#353b4e" stroke-width="1.5"><line x1="2252.0" y1="1689.5" x2="2252.0" y2="1695.5"/><line x1="2293.0" y1="1689.5" x2="2293.0" y2="1695.5"/><line x1="2333.9" y1="1689.5" x2="2333.9" y2="1695.5"/><line x1="2374.9" y1="1689.5" x2="2374.9" y2="1695.5"/><line x1="2415.9" y1="1689.5" x2="2415.9" y2="1695.5"/><line x1="2456.9" y1="1689.5" x2="2456.9" y2="1695.5"/><line x1="2497.8" y1="1689.5" x2="2497.8" y2="1695.5"/><line x1="2538.8" y1="1689.5" x2="2538.8" y2="1695.5"/><line x1="2579.8" y1="1689.5" x2="2579.8" y2="1695.5"/><line x1="2620.7" y1="1689.5" x2="2620.7" y2="1695.5"/><line x1="2661.7" y1="1689.5" x2="2661.7" y2="1695.5"/><line x1="2702.7" y1="1689.5" x2="2702.7" y2="1695.5"/><line x1="2743.7" y1="1689.5" x2="2743.7" y2="1695.5"/><line x1="2784.6" y1="1689.5" x2="2784.6" y2="1695.5"/><line x1="2825.6" y1="1689.5" x2="2825.6" y2="1695.5"/></g><polyline points="2220.6,1504.8 2230.4,1466.4 2240.9,1467.5 2251.4,1486.6 2263.6,1486.6 2271.3,1488.4 2281.0,1468.2 2291.5,1447.2 2302.7,1449.0 2312.4,1544.2 2322.9,1524.0 2333.4,1524.7 2343.2,1543.2 2353.3,1506.5 2363.8,1488.0 2373.5,1447.2 2384.7,1428.7 2395.2,1503.8 2404.9,1522.9 2416.1,1545.6 2425.2,1447.2 2446.1,1447.2 2456.2,1525.7 2466.0,1505.5 2475.8,1505.5 2486.3,1468.2 2497.4,1466.4 2507.2,1467.1 2517.7,1503.8 2527.8,1483.9 2538.3,1465.7 2548.0,1467.1 2558.2,1449.0 2568.3,1467.1 2578.4,1448.3 2588.9,1447.2 2599.4,1449.0 2609.8,1449.0 2620.3,1468.8 2630.8,1507.2 2640.5,1507.2 2651.0,1486.3 2660.8,1448.3 2670.9,1449.7 2681.4,1468.2 2691.2,1465.4 2702.3,1487.3 2712.1,1504.8 2722.6,1484.6 2733.0,1488.0 2742.5,1486.3 2753.3,1468.2 2763.8,1449.0 2773.2,1507.6 2783.6,1505.5 2794.1,1486.3 2804.6,1467.5 2814.4,1466.4 2824.8,1447.2" fill="none" stroke="#72c4c2" stroke-width="3" stroke-linejoin="round" stroke-linecap="round"/><polyline points="2220.6,1519.3 2230.9,1520.5 2241.1,1521.7 2251.4,1522.5 2261.6,1520.5 2271.9,1520.5 2282.1,1518.3 2292.4,1520.5 2302.6,1519.3 2312.9,1518.3 2323.1,1520.5 2333.4,1518.3 2343.7,1520.5 2353.9,1520.5 2364.2,1520.5 2374.4,1521.7 2384.7,1521.7 2394.9,1520.5 2405.2,1520.5 2415.4,1520.5 2425.7,1518.3 2435.9,1521.7 2446.2,1520.5 2456.4,1518.3 2466.7,1520.5 2477.0,1520.5 2487.2,1522.5 2497.5,1522.5 2507.7,1518.3 2518.0,1520.5 2528.2,1518.3 2538.5,1518.3 2548.7,1521.7 2559.0,1520.5 2569.2,1520.5 2579.5,1520.5 2589.8,1518.3 2600.0,1520.5 2610.3,1519.3 2620.5,1521.7 2630.8,1520.5 2641.0,1518.3 2651.3,1520.5 2661.5,1518.3 2671.8,1519.3 2682.0,1518.3 2692.3,1522.5 2702.5,1520.5 2712.8,1520.5 2723.1,1518.3 2733.3,1518.3 2743.6,1522.5 2753.8,1520.5 2764.1,1519.3 2774.3,1520.5 2784.6,1518.3 2794.8,1522.5 2805.1,1520.5 2815.3,1518.3 2825.6,1520.5" fill="none" stroke="#e59078" stroke-width="2.8" stroke-linejoin="round" stroke-linecap="round"/><polyline points="2220.6,1668.2 2825.6,1668.0" fill="none" stroke="#d98b3a" stroke-width="3" stroke-linejoin="round" stroke-linecap="round"/><polyline points="2220.6,1685.8 2825.6,1685.8" fill="none" stroke="#e07a60" stroke-width="4.5" stroke-linejoin="round" stroke-linecap="round"/></svg></div>
<div style="position:absolute;left:2115.0px;top:1256.3px;width:751.0px;height:539.3px;border-radius:16px;border:2px solid #30364a;box-sizing:border-box"></div>
<div class="t" id="tx60" style="left:2147.5px;top:1295.3px;font-size:25.2px;color:#f2f3f7;font-weight:400;letter-spacing:0.658px;-webkit-text-stroke:0.25px #f2f3f7;"><span>Network traffic per second</span></div>
<svg style="position:absolute;left:2800.5px;top:1302.0px;" width="28.0" height="12.0" viewBox="2800.5 1302.0 28.0 12.0"><g fill="#6f7690"><circle cx="2806.7" cy="1308" r="2.4"/><circle cx="2814.5" cy="1308" r="2.4"/><circle cx="2822.3" cy="1308" r="2.4"/></g></svg>
<div class="t" id="tx61" style="right:1456.5px;top:1395.5px;font-size:22.2px;color:#979eb9;font-weight:400;letter-spacing:-0.320px;"><span>250 B</span></div>
<div class="t" id="tx62" style="right:1456.5px;top:1450.9px;font-size:22.2px;color:#979eb9;font-weight:400;letter-spacing:-0.320px;"><span>200 B</span></div>
<div class="t" id="tx63" style="right:1456.5px;top:1506.2px;font-size:22.2px;color:#979eb9;font-weight:400;letter-spacing:-0.320px;"><span>150 B</span></div>
<div class="t" id="tx64" style="right:1456.5px;top:1561.6px;font-size:22.2px;color:#979eb9;font-weight:400;letter-spacing:-0.320px;"><span>100 B</span></div>
<div class="t" id="tx65" style="right:1456.5px;top:1616.9px;font-size:22.2px;color:#979eb9;font-weight:400;letter-spacing:-0.320px;"><span>50 B</span></div>
<div class="t" id="tx66" style="right:1456.5px;top:1672.3px;font-size:22.2px;color:#979eb9;font-weight:400;letter-spacing:-0.320px;"><span>0 B</span></div>
<div class="t" id="tx67" style="left:1248.7px;width:2000px;text-align:center;top:1699.8px;font-size:23px;color:#979eb9;font-weight:400;letter-spacing:0.421px;"><span>12:42:00am</span></div>
<div class="t" id="tx68" style="left:1412.0px;width:2000px;text-align:center;top:1699.8px;font-size:23px;color:#979eb9;font-weight:400;letter-spacing:0.421px;"><span>12:50:00am</span></div>
<div class="t" id="tx69" style="left:1616.8px;width:2000px;text-align:center;top:1699.8px;font-size:23px;color:#979eb9;font-weight:400;letter-spacing:0.421px;"><span>1:00:00am</span></div>
<div class="t" id="tx70" style="left:1739.3px;width:2000px;text-align:center;top:1699.8px;font-size:23px;color:#979eb9;font-weight:400;letter-spacing:0.421px;"><span>1:06:00am</span></div>
<div style="position:absolute;left:2147.0px;top:1744.0px;width:15.5px;height:16.0px;background:#4aa0e6;border-radius:4px"></div>
<div class="t" id="tx71" style="left:2171.5px;top:1738.0px;font-size:25px;color:#979eb9;font-weight:400;letter-spacing:0.326px;"><span>Received - erspan0</span></div>
<div style="position:absolute;left:2414.4px;top:1744.0px;width:15.5px;height:16.0px;background:#72c4c2;border-radius:4px"></div>
<div class="t" id="tx72" style="left:2439.0px;top:1738.0px;font-size:25px;color:#979eb9;font-weight:400;letter-spacing:0.455px;"><span>Received - eth0</span></div>
<div style="position:absolute;left:2641.0px;top:1744.0px;width:15.5px;height:16.0px;background:#4fae7c;border-radius:4px"></div>
<div style="position:absolute;left:2667.4px;top:1700.0px;width:21px;height:80px;overflow:hidden"><div class="t" style="left:0;top:38.7px;font-size:25px;color:#979eb9;letter-spacing:0.45px;-webkit-text-stroke:0.15px #979eb9">Received</div></div>
<svg style="position:absolute;left:2724.5px;top:1739.0px;" width="20.0" height="24.0" viewBox="2724.5 1739.0 20.0 24.0"><polygon points="2739.5,1741 2726.5,1751 2739.5,1761" fill="#545b72"/></svg>
<div class="t" id="tx73" style="left:2760.0px;top:1738.0px;font-size:25px;color:#979eb9;font-weight:400;letter-spacing:0.334px;"><span>1/11</span></div>
<svg style="position:absolute;left:2819.0px;top:1739.0px;" width="20.0" height="24.0" viewBox="2819.0 1739.0 20.0 24.0"><polygon points="2821,1741 2834,1751 2821,1761" fill="#a3aac3"/></svg>
<div style="position:absolute;left:2885.6px;top:1256.3px;width:751.0px;height:539.3px;border-radius:16px;background:#222737;overflow:hidden;box-shadow:0 3px 8px rgba(10,12,20,.35)"></div>
<div style="position:absolute;left:2885.6px;top:1256.3px;width:751.0px;height:539.3px;border-radius:16px;border:2px solid #30364a;box-sizing:border-box"></div>
<div class="t" id="tx74" style="left:2916.9px;top:1295.3px;font-size:25.2px;color:#f2f3f7;font-weight:400;letter-spacing:0.300px;-webkit-text-stroke:0.25px #f2f3f7;"><span>Disk space used</span></div>
<svg style="position:absolute;left:3571.1px;top:1302.0px;" width="28.0" height="12.0" viewBox="3571.1 1302.0 28.0 12.0"><g fill="#6f7690"><circle cx="3577.3" cy="1308" r="2.4"/><circle cx="3585.1" cy="1308" r="2.4"/><circle cx="3592.9" cy="1308" r="2.4"/></g></svg>
<svg style="position:absolute;left:3147.8px;top:1555.4px;" width="36.0" height="42.0" viewBox="3147.8 1555.4 36.0 42.0"><g fill="none" stroke="#6c7289" stroke-width="2.6" stroke-linejoin="round" stroke-linecap="round"><path d="M3152.3,1562.4 C3152.3,1560.4 3153.8,1559.7 3155.8,1559.7 L3167.8,1559.7 L3177.8,1569.4 L3177.8,1589.4 C3177.8,1591.4 3176.3,1592.4 3174.3,1592.4 L3155.8,1592.4 C3153.8,1592.4 3152.3,1591.4 3152.3,1589.4 Z"/><path d="M3167.8,1559.7 L3167.8,1569.4 L3177.8,1569.4"/><line x1="3159.3" y1="1586.4" x2="3159.3" y2="1584.9"/><line x1="3164.3" y1="1586.4" x2="3164.3" y2="1581.4"/><line x1="3169.3" y1="1586.4" x2="3169.3" y2="1577.4"/></g></svg>
<div class="t" id="tx75" style="left:3199.6px;top:1563.7px;font-size:27px;color:#6c7289;font-weight:400;letter-spacing:0.701px;-webkit-text-stroke:0.2px #6c7289;"><span>No data found</span></div>
<div class="t" id="tx76" style="left:598.0px;top:1838.7px;font-size:27.2px;color:#f2f3f7;font-weight:400;letter-spacing:0.250px;-webkit-text-stroke:0.45px #f2f3f7;"><span>Advanced CPU, memory, network, and disk</span></div>
<svg style="position:absolute;left:1149.6px;top:1843.0px;" width="24.0" height="22.0" viewBox="1149.6 1843.0 24.0 22.0"><polyline points="1153.3,1850 1161.6,1859 1169.8999999999999,1850" fill="none" stroke="#8f97b3" stroke-width="2.6" stroke-linecap="round" stroke-linejoin="round"/></svg>
<div class="t" id="tx77" style="right:102.0px;top:1840.2px;font-size:25.5px;color:#979eb9;font-weight:400;letter-spacing:1.398px;-webkit-text-stroke:0.15px #979eb9;"><span>8 charts</span></div>
<svg style="position:absolute;left:3579.0px;top:1846.5px;" width="28.0" height="12.0" viewBox="3579.0 1846.5 28.0 12.0"><g fill="#6f7690"><circle cx="3585.2" cy="1852.5" r="2.4"/><circle cx="3593.0" cy="1852.5" r="2.4"/><circle cx="3600.8" cy="1852.5" r="2.4"/></g></svg>
<div style="position:absolute;left:571.6px;top:1896.3px;width:751.0px;height:539.3px;border-radius:16px;background:#222737;overflow:hidden;box-shadow:0 3px 8px rgba(10,12,20,.35)"><svg style="position:absolute;left:0;top:0" width="751.0" height="539.3" viewBox="571.6 1896.3 751.0 539.3"><line x1="675.2" y1="2048.9" x2="1290.9" y2="2048.9" stroke="#2e3345" stroke-width="1.6"/><line x1="675.2" y1="2104.2" x2="1290.9" y2="2104.2" stroke="#2e3345" stroke-width="1.6"/><line x1="675.2" y1="2159.5" x2="1290.9" y2="2159.5" stroke="#2e3345" stroke-width="1.6"/><line x1="675.2" y1="2214.7" x2="1290.9" y2="2214.7" stroke="#2e3345" stroke-width="1.6"/><line x1="675.2" y1="2270.0" x2="1290.9" y2="2270.0" stroke="#2e3345" stroke-width="1.6"/><rect x="672.3" y="2321.6" width="622.7" height="8.6" fill="#2b3042"/><g stroke="#353b4e" stroke-width="1.5"><line x1="705.8" y1="2329.5" x2="705.8" y2="2335.5"/><line x1="746.9" y1="2329.5" x2="746.9" y2="2335.5"/><line x1="788.0" y1="2329.5" x2="788.0" y2="2335.5"/><line x1="829.1" y1="2329.5" x2="829.1" y2="2335.5"/><line x1="870.2" y1="2329.5" x2="870.2" y2="2335.5"/><line x1="911.3" y1="2329.5" x2="911.3" y2="2335.5"/><line x1="952.4" y1="2329.5" x2="952.4" y2="2335.5"/><line x1="993.5" y1="2329.5" x2="993.5" y2="2335.5"/><line x1="1034.7" y1="2329.5" x2="1034.7" y2="2335.5"/><line x1="1075.8" y1="2329.5" x2="1075.8" y2="2335.5"/><line x1="1116.9" y1="2329.5" x2="1116.9" y2="2335.5"/><line x1="1158.0" y1="2329.5" x2="1158.0" y2="2335.5"/><line x1="1199.1" y1="2329.5" x2="1199.1" y2="2335.5"/><line x1="1240.2" y1="2329.5" x2="1240.2" y2="2335.5"/><line x1="1281.3" y1="2329.5" x2="1281.3" y2="2335.5"/></g><polyline points="675.2,2048.9 746.4,2048.9 757.0,2059.5 768.0,2050.0 780.0,2048.6 1281.0,2048.8" fill="none" stroke="#4aa0e6" stroke-width="3" stroke-linejoin="round" stroke-linecap="round"/><polygon points="745.0,2327.0 757.0,2319.0 770.0,2327.0" fill="#d98b3a"/><polygon points="748.0,2327.0 757.0,2322.5 767.0,2327.0" fill="#4fae7c"/><polyline points="675.2,2327.0 1281.0,2327.0" fill="none" stroke="#4fae7c" stroke-width="1.5" stroke-linejoin="round" stroke-linecap="round"/><polyline points="675.2,2325.6 747.0,2325.6 757.0,2318.5 768.0,2325.6 1281.0,2325.6" fill="none" stroke="#d9717f" stroke-width="3.4" stroke-linejoin="round" stroke-linecap="round"/></svg></div>
<div style="position:absolute;left:571.6px;top:1896.3px;width:751.0px;height:539.3px;border-radius:16px;border:2px solid #30364a;box-sizing:border-box"></div>
<div class="t" id="tx78" style="left:604.9px;top:1935.3px;font-size:25.2px;color:#f2f3f7;font-weight:400;letter-spacing:-0.889px;-webkit-text-stroke:0.25px #f2f3f7;"><span>CPU</span></div>
<svg style="position:absolute;left:1257.1px;top:1942.0px;" width="28.0" height="12.0" viewBox="1257.1 1942.0 28.0 12.0"><g fill="#6f7690"><circle cx="1263.3" cy="1948" r="2.4"/><circle cx="1271.1" cy="1948" r="2.4"/><circle cx="1278.9" cy="1948" r="2.4"/></g></svg>
<div class="t" id="tx79" style="right:3002.4px;top:2035.6px;font-size:22.2px;color:#979eb9;font-weight:400;letter-spacing:-0.565px;"><span>100%</span></div>
<div class="t" id="tx80" style="right:3002.4px;top:2090.9px;font-size:22.2px;color:#979eb9;font-weight:400;letter-spacing:-0.320px;"><span>80%</span></div>
<div class="t" id="tx81" style="right:3002.4px;top:2146.2px;font-size:22.2px;color:#979eb9;font-weight:400;letter-spacing:-0.320px;"><span>60%</span></div>
<div class="t" id="tx82" style="right:3002.4px;top:2201.4px;font-size:22.2px;color:#979eb9;font-weight:400;letter-spacing:-0.320px;"><span>40%</span></div>
<div class="t" id="tx83" style="right:3002.4px;top:2256.7px;font-size:22.2px;color:#979eb9;font-weight:400;letter-spacing:-0.320px;"><span>20%</span></div>
<div class="t" id="tx84" style="right:3002.4px;top:2312.0px;font-size:22.2px;color:#979eb9;font-weight:400;letter-spacing:-0.320px;"><span>0%</span></div>
<div class="t" id="tx85" style="left:-296.9px;width:2000px;text-align:center;top:2339.8px;font-size:23px;color:#979eb9;font-weight:400;letter-spacing:0.421px;"><span>12:42:00am</span></div>
<div class="t" id="tx86" style="left:-133.0px;width:2000px;text-align:center;top:2339.8px;font-size:23px;color:#979eb9;font-weight:400;letter-spacing:0.421px;"><span>12:50:00am</span></div>
<div class="t" id="tx87" style="left:72.0px;width:2000px;text-align:center;top:2339.8px;font-size:23px;color:#979eb9;font-weight:400;letter-spacing:0.421px;"><span>1:00:00am</span></div>
<div class="t" id="tx88" style="left:195.0px;width:2000px;text-align:center;top:2339.8px;font-size:23px;color:#979eb9;font-weight:400;letter-spacing:0.421px;"><span>1:06:00am</span></div>
<div style="position:absolute;left:603.0px;top:2384.0px;width:15.5px;height:16.0px;background:#72c4c2;border-radius:4px"></div>
<div class="t" id="tx89" style="left:627.0px;top:2378.0px;font-size:25px;color:#979eb9;font-weight:400;letter-spacing:0.321px;"><span>I/O Wait - Waiting for I/O to complete</span></div>
<div style="position:absolute;left:1066.5px;top:2384.0px;width:15.5px;height:16.0px;background:#4aa0e6;border-radius:4px"></div>
<div class="t" id="tx90" style="left:1093.3px;top:2378.0px;font-size:25px;color:#979eb9;font-weight:400;letter-spacing:0.334px;"><span>Idle</span></div>
<svg style="position:absolute;left:1180.5px;top:2379.5px;" width="20.0" height="24.0" viewBox="1180.5 2379.5 20.0 24.0"><polygon points="1195.5,2381.5 1182.5,2391.5 1195.5,2401.5" fill="#545b72"/></svg>
<div class="t" id="tx91" style="left:1220.0px;top:2378.0px;font-size:25px;color:#979eb9;font-weight:400;letter-spacing:0.334px;"><span>1/5</span></div>
<svg style="position:absolute;left:1275.0px;top:2379.5px;" width="20.0" height="24.0" viewBox="1275.0 2379.5 20.0 24.0"><polygon points="1277,2381.5 1290,2391.5 1277,2401.5" fill="#a3aac3"/></svg>
<div style="position:absolute;left:1343.2px;top:1896.3px;width:751.0px;height:539.3px;border-radius:16px;background:#222737;overflow:hidden;box-shadow:0 3px 8px rgba(10,12,20,.35)"><svg style="position:absolute;left:0;top:0" width="751.0" height="539.3" viewBox="1343.2 1896.3 751.0 539.3"><line x1="1487" y1="2048.8" x2="2062.7" y2="2048.8" stroke="#2e3345" stroke-width="1.6"/><line x1="1487" y1="2095.1" x2="2062.7" y2="2095.1" stroke="#2e3345" stroke-width="1.6"/><line x1="1487" y1="2141.3" x2="2062.7" y2="2141.3" stroke="#2e3345" stroke-width="1.6"/><line x1="1487" y1="2187.6" x2="2062.7" y2="2187.6" stroke="#2e3345" stroke-width="1.6"/><line x1="1487" y1="2233.8" x2="2062.7" y2="2233.8" stroke="#2e3345" stroke-width="1.6"/><line x1="1487" y1="2280.1" x2="2062.7" y2="2280.1" stroke="#2e3345" stroke-width="1.6"/><rect x="1483" y="2322.3" width="584" height="7" fill="#2a2f40"/><g stroke="#353b4e" stroke-width="1.5"><line x1="1515.3" y1="2329.3" x2="1515.3" y2="2335.3"/><line x1="1553.7" y1="2329.3" x2="1553.7" y2="2335.3"/><line x1="1592.2" y1="2329.3" x2="1592.2" y2="2335.3"/><line x1="1630.6" y1="2329.3" x2="1630.6" y2="2335.3"/><line x1="1669.1" y1="2329.3" x2="1669.1" y2="2335.3"/><line x1="1707.5" y1="2329.3" x2="1707.5" y2="2335.3"/><line x1="1746.0" y1="2329.3" x2="1746.0" y2="2335.3"/><line x1="1784.4" y1="2329.3" x2="1784.4" y2="2335.3"/><line x1="1822.8" y1="2329.3" x2="1822.8" y2="2335.3"/><line x1="1861.3" y1="2329.3" x2="1861.3" y2="2335.3"/><line x1="1899.7" y1="2329.3" x2="1899.7" y2="2335.3"/><line x1="1938.2" y1="2329.3" x2="1938.2" y2="2335.3"/><line x1="1976.6" y1="2329.3" x2="1976.6" y2="2335.3"/><line x1="2015.1" y1="2329.3" x2="2015.1" y2="2335.3"/><line x1="2053.5" y1="2329.3" x2="2053.5" y2="2335.3"/></g><polyline points="1487.0,2093.3 1554.5,2092.2 1564.0,2098.3 1575.0,2098.6 1600.0,2097.0 1650.0,2094.4 1750.0,2093.6 2053.0,2093.2" fill="none" stroke="#4fae7c" stroke-width="3" stroke-linejoin="round" stroke-linecap="round"/><polyline points="1487.0,2237.3 1555.0,2237.3 1565.0,2236.5 2053.0,2236.5" fill="none" stroke="#72c4c2" stroke-width="3" stroke-linejoin="round" stroke-linecap="round"/><polyline points="1487.0,2314.4 2053.0,2314.2" fill="none" stroke="#4aa0e6" stroke-width="3" stroke-linejoin="round" stroke-linecap="round"/></svg></div>
<div style="position:absolute;left:1343.2px;top:1896.3px;width:751.0px;height:539.3px;border-radius:16px;border:2px solid #30364a;box-sizing:border-box"></div>
<div class="t" id="tx92" style="left:1375.7px;top:1935.3px;font-size:25.2px;color:#f2f3f7;font-weight:400;letter-spacing:0.711px;-webkit-text-stroke:0.25px #f2f3f7;"><span>Memory</span></div>
<svg style="position:absolute;left:2028.7px;top:1942.0px;" width="28.0" height="12.0" viewBox="2028.7 1942.0 28.0 12.0"><g fill="#6f7690"><circle cx="2034.9" cy="1948" r="2.4"/><circle cx="2042.7" cy="1948" r="2.4"/><circle cx="2050.5" cy="1948" r="2.4"/></g></svg>
<div class="t" id="tx93" style="right:2189.4px;top:2035.5px;font-size:22.2px;color:#979eb9;font-weight:400;letter-spacing:-0.320px;"><span>11.18 GiB</span></div>
<div class="t" id="tx94" style="right:2189.4px;top:2081.8px;font-size:22.2px;color:#979eb9;font-weight:400;letter-spacing:-0.320px;"><span>9.31 GiB</span></div>
<div class="t" id="tx95" style="right:2189.4px;top:2128.0px;font-size:22.2px;color:#979eb9;font-weight:400;letter-spacing:-0.320px;"><span>7.45 GiB</span></div>
<div class="t" id="tx96" style="right:2189.4px;top:2174.3px;font-size:22.2px;color:#979eb9;font-weight:400;letter-spacing:-0.320px;"><span>5.59 GiB</span></div>
<div class="t" id="tx97" style="right:2189.4px;top:2220.5px;font-size:22.2px;color:#979eb9;font-weight:400;letter-spacing:-0.320px;"><span>3.73 GiB</span></div>
<div class="t" id="tx98" style="right:2189.4px;top:2266.8px;font-size:22.2px;color:#979eb9;font-weight:400;letter-spacing:-0.320px;"><span>1.86 GiB</span></div>
<div class="t" id="tx99" style="right:2189.4px;top:2313.0px;font-size:22.2px;color:#979eb9;font-weight:400;letter-spacing:-0.320px;"><span>0 GiB</span></div>
<div class="t" id="tx100" style="left:513.5px;width:2000px;text-align:center;top:2339.8px;font-size:23px;color:#979eb9;font-weight:400;letter-spacing:0.421px;"><span>12:42:00am</span></div>
<div class="t" id="tx101" style="left:666.5px;width:2000px;text-align:center;top:2339.8px;font-size:23px;color:#979eb9;font-weight:400;letter-spacing:0.421px;"><span>12:50:00am</span></div>
<div class="t" id="tx102" style="left:858.3px;width:2000px;text-align:center;top:2339.8px;font-size:23px;color:#979eb9;font-weight:400;letter-spacing:0.421px;"><span>1:00:00am</span></div>
<div class="t" id="tx103" style="left:973.7px;width:2000px;text-align:center;top:2339.8px;font-size:23px;color:#979eb9;font-weight:400;letter-spacing:0.421px;"><span>1:06:00am</span></div>
<div style="position:absolute;left:1375.5px;top:2383.0px;width:15.5px;height:16.0px;background:#4aa0e6;border-radius:4px"></div>
<div class="t" id="tx104" style="left:1399.4px;top:2377.8px;font-size:25px;color:#979eb9;font-weight:400;letter-spacing:0.336px;"><span>Buffers - Block device (e.g. harddisk) cache</span></div>
<svg style="position:absolute;left:1952.0px;top:2379.0px;" width="20.0" height="24.0" viewBox="1952.0 2379.0 20.0 24.0"><polygon points="1967,2381 1954,2391 1967,2401" fill="#545b72"/></svg>
<div class="t" id="tx105" style="left:1991.2px;top:2377.8px;font-size:25px;color:#979eb9;font-weight:400;letter-spacing:0.334px;"><span>1/3</span></div>
<svg style="position:absolute;left:2047.0px;top:2379.0px;" width="20.0" height="24.0" viewBox="2047.0 2379.0 20.0 24.0"><polygon points="2049,2381 2062,2391 2049,2401" fill="#a3aac3"/></svg>
<div style="position:absolute;left:2115.0px;top:1896.3px;width:751.0px;height:539.3px;border-radius:16px;background:#222737;overflow:hidden;box-shadow:0 3px 8px rgba(10,12,20,.35)"><svg style="position:absolute;left:0;top:0" width="751.0" height="539.3" viewBox="2115.0 1896.3 751.0 539.3"><line x1="2220.6" y1="2048.8" x2="2835" y2="2048.8" stroke="#2e3345" stroke-width="1.6"/><line x1="2220.6" y1="2104.2" x2="2835" y2="2104.2" stroke="#2e3345" stroke-width="1.6"/><line x1="2220.6" y1="2159.5" x2="2835" y2="2159.5" stroke="#2e3345" stroke-width="1.6"/><line x1="2220.6" y1="2214.9" x2="2835" y2="2214.9" stroke="#2e3345" stroke-width="1.6"/><line x1="2220.6" y1="2270.2" x2="2835" y2="2270.2" stroke="#2e3345" stroke-width="1.6"/><rect x="2216.5" y="2322.6" width="622" height="7" fill="#2a2f40"/><g stroke="#353b4e" stroke-width="1.5"><line x1="2252.0" y1="2329.5" x2="2252.0" y2="2335.5"/><line x1="2293.0" y1="2329.5" x2="2293.0" y2="2335.5"/><line x1="2333.9" y1="2329.5" x2="2333.9" y2="2335.5"/><line x1="2374.9" y1="2329.5" x2="2374.9" y2="2335.5"/><line x1="2415.9" y1="2329.5" x2="2415.9" y2="2335.5"/><line x1="2456.9" y1="2329.5" x2="2456.9" y2="2335.5"/><line x1="2497.8" y1="2329.5" x2="2497.8" y2="2335.5"/><line x1="2538.8" y1="2329.5" x2="2538.8" y2="2335.5"/><line x1="2579.8" y1="2329.5" x2="2579.8" y2="2335.5"/><line x1="2620.7" y1="2329.5" x2="2620.7" y2="2335.5"/><line x1="2661.7" y1="2329.5" x2="2661.7" y2="2335.5"/><line x1="2702.7" y1="2329.5" x2="2702.7" y2="2335.5"/><line x1="2743.7" y1="2329.5" x2="2743.7" y2="2335.5"/><line x1="2784.6" y1="2329.5" x2="2784.6" y2="2335.5"/><line x1="2825.6" y1="2329.5" x2="2825.6" y2="2335.5"/></g><polyline points="2220.6,2144.8 2230.4,2106.4 2240.9,2107.5 2251.4,2126.6 2263.6,2126.6 2271.3,2128.4 2281.0,2108.2 2291.5,2087.2 2302.7,2089.0 2312.4,2184.2 2322.9,2164.0 2333.4,2164.7 2343.2,2183.2 2353.3,2146.5 2363.8,2128.0 2373.5,2087.2 2384.7,2068.7 2395.2,2143.8 2404.9,2162.9 2416.1,2185.6 2425.2,2087.2 2446.1,2087.2 2456.2,2165.7 2466.0,2145.5 2475.8,2145.5 2486.3,2108.2 2497.4,2106.4 2507.2,2107.1 2517.7,2143.8 2527.8,2123.9 2538.3,2105.7 2548.0,2107.1 2558.2,2089.0 2568.3,2107.1 2578.4,2088.3 2588.9,2087.2 2599.4,2089.0 2609.8,2089.0 2620.3,2108.8 2630.8,2147.2 2640.5,2147.2 2651.0,2126.3 2660.8,2088.3 2670.9,2089.7 2681.4,2108.2 2691.2,2105.4 2702.3,2127.3 2712.1,2144.8 2722.6,2124.6 2733.0,2128.0 2742.5,2126.3 2753.3,2108.2 2763.8,2089.0 2773.2,2147.6 2783.6,2145.5 2794.1,2126.3 2804.6,2107.5 2814.4,2106.4 2824.8,2087.2" fill="none" stroke="#72c4c2" stroke-width="3" stroke-linejoin="round" stroke-linecap="round"/><polyline points="2220.6,2159.3 2230.9,2160.5 2241.1,2161.7 2251.4,2162.5 2261.6,2160.5 2271.9,2160.5 2282.1,2158.3 2292.4,2160.5 2302.6,2159.3 2312.9,2158.3 2323.1,2160.5 2333.4,2158.3 2343.7,2160.5 2353.9,2160.5 2364.2,2160.5 2374.4,2161.7 2384.7,2161.7 2394.9,2160.5 2405.2,2160.5 2415.4,2160.5 2425.7,2158.3 2435.9,2161.7 2446.2,2160.5 2456.4,2158.3 2466.7,2160.5 2477.0,2160.5 2487.2,2162.5 2497.5,2162.5 2507.7,2158.3 2518.0,2160.5 2528.2,2158.3 2538.5,2158.3 2548.7,2161.7 2559.0,2160.5 2569.2,2160.5 2579.5,2160.5 2589.8,2158.3 2600.0,2160.5 2610.3,2159.3 2620.5,2161.7 2630.8,2160.5 2641.0,2158.3 2651.3,2160.5 2661.5,2158.3 2671.8,2159.3 2682.0,2158.3 2692.3,2162.5 2702.5,2160.5 2712.8,2160.5 2723.1,2158.3 2733.3,2158.3 2743.6,2162.5 2753.8,2160.5 2764.1,2159.3 2774.3,2160.5 2784.6,2158.3 2794.8,2162.5 2805.1,2160.5 2815.3,2158.3 2825.6,2160.5" fill="none" stroke="#e59078" stroke-width="2.8" stroke-linejoin="round" stroke-linecap="round"/><polyline points="2220.6,2308.2 2825.6,2308.0" fill="none" stroke="#d98b3a" stroke-width="3" stroke-linejoin="round" stroke-linecap="round"/><polyline points="2220.6,2325.8 2825.6,2325.8" fill="none" stroke="#e07a60" stroke-width="4.5" stroke-linejoin="round" stroke-linecap="round"/></svg></div>
<div style="position:absolute;left:2115.0px;top:1896.3px;width:751.0px;height:539.3px;border-radius:16px;border:2px solid #30364a;box-sizing:border-box"></div>
<div class="t" id="tx106" style="left:2147.5px;top:1935.3px;font-size:25.2px;color:#f2f3f7;font-weight:400;letter-spacing:0.658px;-webkit-text-stroke:0.25px #f2f3f7;"><span>Network traffic per second</span></div>
<svg style="position:absolute;left:2800.5px;top:1942.0px;" width="28.0" height="12.0" viewBox="2800.5 1942.0 28.0 12.0"><g fill="#6f7690"><circle cx="2806.7" cy="1948" r="2.4"/><circle cx="2814.5" cy="1948" r="2.4"/><circle cx="2822.3" cy="1948" r="2.4"/></g></svg>
<div class="t" id="tx107" style="right:1456.5px;top:2035.5px;font-size:22.2px;color:#979eb9;font-weight:400;letter-spacing:-0.320px;"><span>250 B</span></div>
<div class="t" id="tx108" style="right:1456.5px;top:2090.9px;font-size:22.2px;color:#979eb9;font-weight:400;letter-spacing:-0.320px;"><span>200 B</span></div>
<div class="t" id="tx109" style="right:1456.5px;top:2146.2px;font-size:22.2px;color:#979eb9;font-weight:400;letter-spacing:-0.320px;"><span>150 B</span></div>
<div class="t" id="tx110" style="right:1456.5px;top:2201.6px;font-size:22.2px;color:#979eb9;font-weight:400;letter-spacing:-0.320px;"><span>100 B</span></div>
<div class="t" id="tx111" style="right:1456.5px;top:2256.9px;font-size:22.2px;color:#979eb9;font-weight:400;letter-spacing:-0.320px;"><span>50 B</span></div>
<div class="t" id="tx112" style="right:1456.5px;top:2312.3px;font-size:22.2px;color:#979eb9;font-weight:400;letter-spacing:-0.320px;"><span>0 B</span></div>
<div class="t" id="tx113" style="left:1248.7px;width:2000px;text-align:center;top:2339.8px;font-size:23px;color:#979eb9;font-weight:400;letter-spacing:0.421px;"><span>12:42:00am</span></div>
<div class="t" id="tx114" style="left:1412.0px;width:2000px;text-align:center;top:2339.8px;font-size:23px;color:#979eb9;font-weight:400;letter-spacing:0.421px;"><span>12:50:00am</span></div>
<div class="t" id="tx115" style="left:1616.8px;width:2000px;text-align:center;top:2339.8px;font-size:23px;color:#979eb9;font-weight:400;letter-spacing:0.421px;"><span>1:00:00am</span></div>
<div class="t" id="tx116" style="left:1739.3px;width:2000px;text-align:center;top:2339.8px;font-size:23px;color:#979eb9;font-weight:400;letter-spacing:0.421px;"><span>1:06:00am</span></div>
<div style="position:absolute;left:2147.0px;top:2384.0px;width:15.5px;height:16.0px;background:#4aa0e6;border-radius:4px"></div>
<div class="t" id="tx117" style="left:2171.5px;top:2378.0px;font-size:25px;color:#979eb9;font-weight:400;letter-spacing:0.326px;"><span>Received - erspan0</span></div>
<div style="position:absolute;left:2414.4px;top:2384.0px;width:15.5px;height:16.0px;background:#72c4c2;border-radius:4px"></div>
<div class="t" id="tx118" style="left:2439.0px;top:2378.0px;font-size:25px;color:#979eb9;font-weight:400;letter-spacing:0.455px;"><span>Received - eth0</span></div>
<div style="position:absolute;left:2641.0px;top:2384.0px;width:15.5px;height:16.0px;background:#4fae7c;border-radius:4px"></div>
<div style="position:absolute;left:2667.4px;top:2340.0px;width:21px;height:80px;overflow:hidden"><div class="t" style="left:0;top:38.7px;font-size:25px;color:#979eb9;letter-spacing:0.45px;-webkit-text-stroke:0.15px #979eb9">Received</div></div>
<svg style="position:absolute;left:2724.5px;top:2379.0px;" width="20.0" height="24.0" viewBox="2724.5 2379.0 20.0 24.0"><polygon points="2739.5,2381 2726.5,2391 2739.5,2401" fill="#545b72"/></svg>
<div class="t" id="tx119" style="left:2760.0px;top:2378.0px;font-size:25px;color:#979eb9;font-weight:400;letter-spacing:0.334px;"><span>1/11</span></div>
<svg style="position:absolute;left:2819.0px;top:2379.0px;" width="20.0" height="24.0" viewBox="2819.0 2379.0 20.0 24.0"><polygon points="2821,2381 2834,2391 2821,2401" fill="#a3aac3"/></svg>
<div style="position:absolute;left:2885.6px;top:1896.3px;width:751.0px;height:539.3px;border-radius:16px;background:#222737;overflow:hidden;box-shadow:0 3px 8px rgba(10,12,20,.35)"><svg style="position:absolute;left:0;top:0" width="751.0" height="539.3" viewBox="2885.6 1896.3 751.0 539.3"><line x1="2964" y1="2049.0" x2="3604.5" y2="2049.0" stroke="#2e3345" stroke-width="1.6"/><line x1="2964" y1="2104.3" x2="3604.5" y2="2104.3" stroke="#2e3345" stroke-width="1.6"/><line x1="2964" y1="2159.5" x2="3604.5" y2="2159.5" stroke="#2e3345" stroke-width="1.6"/><line x1="2964" y1="2214.8" x2="3604.5" y2="2214.8" stroke="#2e3345" stroke-width="1.6"/><line x1="2964" y1="2270.0" x2="3604.5" y2="2270.0" stroke="#2e3345" stroke-width="1.6"/><rect x="2960" y="2322" width="648" height="7" fill="#2a2f40"/><g stroke="#353b4e" stroke-width="1.5"><line x1="2995.5" y1="2329.3" x2="2995.5" y2="2335.3"/><line x1="3038.3" y1="2329.3" x2="3038.3" y2="2335.3"/><line x1="3081.1" y1="2329.3" x2="3081.1" y2="2335.3"/><line x1="3123.9" y1="2329.3" x2="3123.9" y2="2335.3"/><line x1="3166.6" y1="2329.3" x2="3166.6" y2="2335.3"/><line x1="3209.4" y1="2329.3" x2="3209.4" y2="2335.3"/><line x1="3252.2" y1="2329.3" x2="3252.2" y2="2335.3"/><line x1="3295.0" y1="2329.3" x2="3295.0" y2="2335.3"/><line x1="3337.8" y1="2329.3" x2="3337.8" y2="2335.3"/><line x1="3380.6" y1="2329.3" x2="3380.6" y2="2335.3"/><line x1="3423.4" y1="2329.3" x2="3423.4" y2="2335.3"/><line x1="3466.1" y1="2329.3" x2="3466.1" y2="2335.3"/><line x1="3508.9" y1="2329.3" x2="3508.9" y2="2335.3"/><line x1="3551.7" y1="2329.3" x2="3551.7" y2="2335.3"/><line x1="3594.5" y1="2329.3" x2="3594.5" y2="2335.3"/></g><polyline points="2964.0,2325.5 3594.0,2325.5" fill="none" stroke="#e07a60" stroke-width="4.5" stroke-linejoin="round" stroke-linecap="round"/></svg></div>
<div style="position:absolute;left:2885.6px;top:1896.3px;width:751.0px;height:539.3px;border-radius:16px;border:2px solid #30364a;box-sizing:border-box"></div>
<div class="t" id="tx120" style="left:2917.1px;top:1935.3px;font-size:25.2px;color:#f2f3f7;font-weight:400;letter-spacing:0.639px;-webkit-text-stroke:0.25px #f2f3f7;"><span>Network traffic errors per second</span></div>
<svg style="position:absolute;left:3571.1px;top:1942.0px;" width="28.0" height="12.0" viewBox="3571.1 1942.0 28.0 12.0"><g fill="#6f7690"><circle cx="3577.3" cy="1948" r="2.4"/><circle cx="3585.1" cy="1948" r="2.4"/><circle cx="3592.9" cy="1948" r="2.4"/></g></svg>
<div class="t" id="tx121" style="right:713.6px;top:2035.7px;font-size:22.2px;color:#979eb9;font-weight:400;letter-spacing:-0.320px;"><span>1</span></div>
<div class="t" id="tx122" style="right:713.6px;top:2091.0px;font-size:22.2px;color:#979eb9;font-weight:400;letter-spacing:-0.320px;"><span>0.8</span></div>
<div class="t" id="tx123" style="right:713.6px;top:2146.2px;font-size:22.2px;color:#979eb9;font-weight:400;letter-spacing:-0.320px;"><span>0.6</span></div>
<div class="t" id="tx124" style="right:713.6px;top:2201.5px;font-size:22.2px;color:#979eb9;font-weight:400;letter-spacing:-0.320px;"><span>0.4</span></div>
<div class="t" id="tx125" style="right:713.6px;top:2256.7px;font-size:22.2px;color:#979eb9;font-weight:400;letter-spacing:-0.320px;"><span>0.2</span></div>
<div class="t" id="tx126" style="right:713.6px;top:2312.0px;font-size:22.2px;color:#979eb9;font-weight:400;letter-spacing:-0.320px;"><span>0</span></div>
<div class="t" id="tx127" style="left:1992.7px;width:2000px;text-align:center;top:2339.8px;font-size:23px;color:#979eb9;font-weight:400;letter-spacing:0.421px;"><span>12:42:00am</span></div>
<div class="t" id="tx128" style="left:2163.5px;width:2000px;text-align:center;top:2339.8px;font-size:23px;color:#979eb9;font-weight:400;letter-spacing:0.421px;"><span>12:50:00am</span></div>
<div class="t" id="tx129" style="left:2376.9px;width:2000px;text-align:center;top:2339.8px;font-size:23px;color:#979eb9;font-weight:400;letter-spacing:0.421px;"><span>1:00:00am</span></div>
<div class="t" id="tx130" style="left:2500.5px;width:2000px;text-align:center;top:2339.8px;font-size:23px;color:#979eb9;font-weight:400;letter-spacing:0.421px;"><span>1:06:00am</span></div>
<div style="position:absolute;left:2916.3px;top:2384.0px;width:15.5px;height:16.0px;background:#4aa0e6;border-radius:4px"></div>
<div class="t" id="tx131" style="left:2940.8px;top:2378.0px;font-size:25px;color:#979eb9;font-weight:400;letter-spacing:0.326px;"><span>Received - erspan0</span></div>
<div style="position:absolute;left:3183.7px;top:2384.0px;width:15.5px;height:16.0px;background:#72c4c2;border-radius:4px"></div>
<div class="t" id="tx132" style="left:3208.3px;top:2378.0px;font-size:25px;color:#979eb9;font-weight:400;letter-spacing:0.455px;"><span>Received - eth0</span></div>
<div style="position:absolute;left:3410.3px;top:2384.0px;width:15.5px;height:16.0px;background:#4fae7c;border-radius:4px"></div>
<div style="position:absolute;left:3436.7px;top:2340.0px;width:21px;height:80px;overflow:hidden"><div class="t" style="left:0;top:38.7px;font-size:25px;color:#979eb9;letter-spacing:0.45px;-webkit-text-stroke:0.15px #979eb9">Received</div></div>
<div style="position:absolute;left:571.6px;top:2456.2px;width:751.0px;height:200.0px;border-radius:16px;background:#222737;overflow:hidden;box-shadow:0 3px 8px rgba(10,12,20,.35)"></div>
<div style="position:absolute;left:571.6px;top:2456.2px;width:751.0px;height:200.0px;border-radius:16px;border:2px solid #30364a;box-sizing:border-box"></div>
<div style="position:absolute;left:1343.2px;top:2456.2px;width:751.0px;height:200.0px;border-radius:16px;background:#222737;overflow:hidden;box-shadow:0 3px 8px rgba(10,12,20,.35)"></div>
<div style="position:absolute;left:1343.2px;top:2456.2px;width:751.0px;height:200.0px;border-radius:16px;border:2px solid #30364a;box-sizing:border-box"></div>
<div style="position:absolute;left:2115.0px;top:2456.2px;width:751.0px;height:200.0px;border-radius:16px;background:#222737;overflow:hidden;box-shadow:0 3px 8px rgba(10,12,20,.35)"></div>
<div style="position:absolute;left:2115.0px;top:2456.2px;width:751.0px;height:200.0px;border-radius:16px;border:2px solid #30364a;box-sizing:border-box"></div>
<div style="position:absolute;left:2885.6px;top:2456.2px;width:751.0px;height:200.0px;border-radius:16px;background:#222737;overflow:hidden;box-shadow:0 3px 8px rgba(10,12,20,.35)"></div>
<div style="position:absolute;left:2885.6px;top:2456.2px;width:751.0px;height:200.0px;border-radius:16px;border:2px solid #30364a;box-sizing:border-box"></div>
<div style="position:absolute;left:3488px;top:2316px;width:128px;height:128px;border-radius:50%;background:#1e1e1e;box-shadow:0 4px 18px rgba(0,0,0,.35)"></div>
<svg style="position:absolute;left:3500.0px;top:2330.0px;" width="100.0" height="100.0" viewBox="3500.0 2330.0 100.0 100.0"><path d="M3550,2345.5 C3570,2345.5 3582,2361 3582,2378 L3582,2404.5 C3582,2407.5 3580,2409.9 3577,2409.9 L3550,2409.9 C3532,2409.9 3518.2,2396 3518.2,2378 C3518.2,2360 3532,2345.5 3550,2345.5 Z" fill="none" stroke="#ffffff" stroke-width="8.2" stroke-linejoin="round"/><g stroke="#ffffff" stroke-width="8.2" stroke-linecap="round"><line x1="3537.8" y1="2373.1" x2="3562" y2="2373.1"/><line x1="3548.2" y1="2387.8" x2="3560.5" y2="2387.8"/></g></svg>
</div></body></html>
